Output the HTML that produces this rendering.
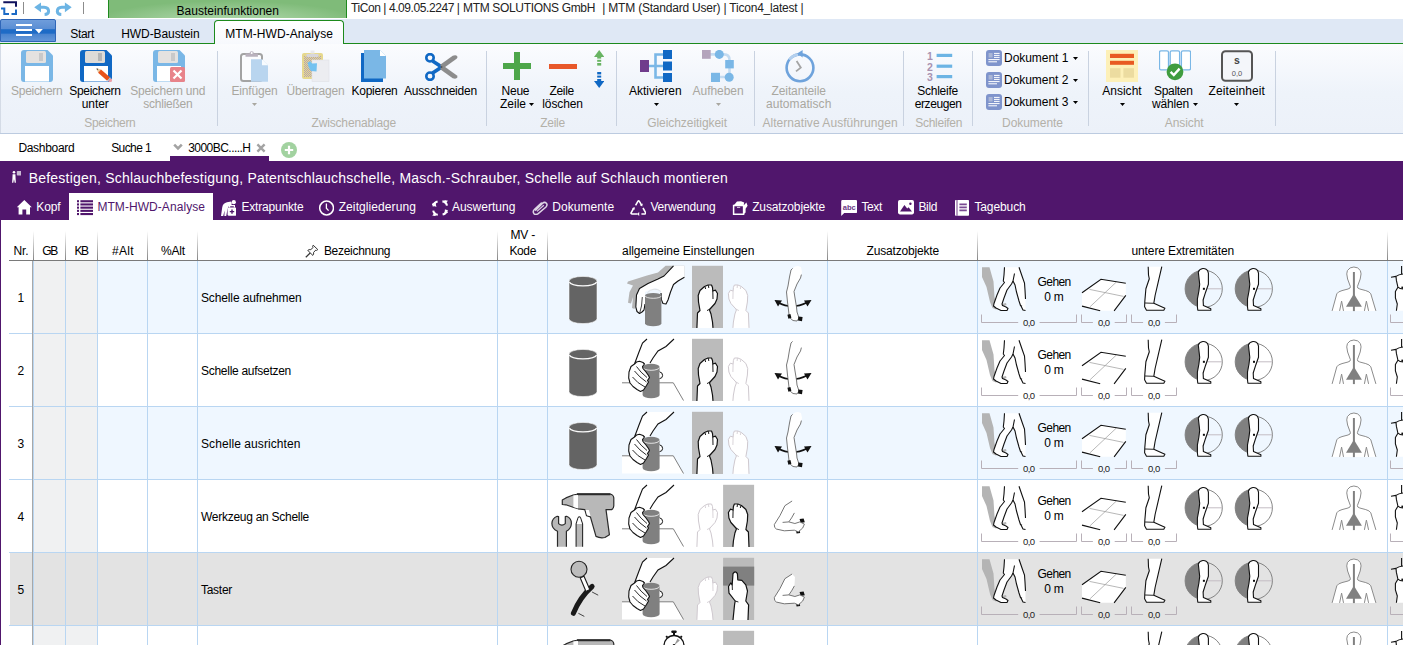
<!DOCTYPE html>
<html lang="de"><head><meta charset="utf-8"><title>TiCon</title><style>
html,body{margin:0;padding:0;background:#fff;}
body{width:1403px;height:645px;overflow:hidden;position:relative;font-family:"Liberation Sans",sans-serif;}
.t{position:absolute;white-space:nowrap;display:block;}
.b{position:absolute;display:block;}
</style></head><body>
<div class="b" style="left:0px;top:0px;width:1403px;height:19px;background:#fff"></div>
<div class="b" style="left:108px;top:0px;width:239px;height:18px;background:radial-gradient(ellipse 56% 120% at 50% 125%,#acd6a8 0%,#9ccc97 50%,#7fbb79 100%);border-left:1px solid #1e8a1e;border-right:1px solid #1e8a1e;box-sizing:border-box"></div>
<span class="t" style="left:176.60px;top:4.84px;font-size:12px;line-height:12px;letter-spacing:0.018px;color:#000;">Bausteinfunktionen</span>
<span class="t" style="left:351.00px;top:1.84px;font-size:12px;line-height:12px;letter-spacing:-0.425px;color:#222;">TiCon | 4.09.05.2247 |</span>
<span class="t" style="left:463.00px;top:1.84px;font-size:12px;line-height:12px;letter-spacing:-0.333px;color:#222;">MTM SOLUTIONS GmbH</span>
<span class="t" style="left:602.30px;top:1.84px;font-size:12px;line-height:12px;letter-spacing:-0.210px;color:#222;">| MTM (Standard User) | Ticon4_latest |</span>
<div class="b" style="left:0px;top:19px;width:1403px;height:24px;background:#dfe8f5"></div>
<div class="b" style="left:0px;top:43px;width:1403px;height:1px;background:#1c8a1c"></div>
<div class="b" style="left:0px;top:19px;width:56px;height:23px;background:linear-gradient(180deg,#6f9ddb 0%,#5a8ed4 42%,#1e6bc6 46%,#1e6bc6 63%,#4a84cf 67%,#6296d8 100%);border:1px solid #2f66b8;box-sizing:border-box;border-radius:2px 2px 0 0"></div>
<div class="b" style="left:16px;top:24px;width:16px;height:2px;background:#fff"></div>
<div class="b" style="left:16px;top:29px;width:16px;height:2px;background:#fff"></div>
<div class="b" style="left:16px;top:34px;width:16px;height:2px;background:#fff"></div>
<svg class="b" style="left:34.6px;top:29px;" width="8" height="4.6" viewBox="0 0 8 4.6"><path d="M0 0H7.8L3.9 4.4Z" fill="#fff"/></svg>
<svg class="b" style="left:0px;top:0px;" width="18" height="16" viewBox="0 0 18 16"><path d="M3.3 2.3H16V6.8" fill="none" stroke="#10125e" stroke-width="2"/><path d="M1 8.4H5.3M4.3 7.5V14H9M11.5 14H16V9.4" fill="none" stroke="#1b6ac6" stroke-width="2"/></svg>
<div class="b" style="left:23px;top:2px;width:1px;height:12px;background:#8c8c8c"></div>
<div class="b" style="left:83px;top:2px;width:1px;height:12px;background:#8c8c8c"></div>
<svg class="b" style="left:0px;top:0px;" width="106" height="17" viewBox="0 0 106 17"><path d="M34.2 7.3L41 2.4V12.2Z" fill="#6cb4e4"/><path d="M40.5 7.3H44Q48.6 7.6 48.6 11.4Q48.4 14.4 44.6 14.6" fill="none" stroke="#6cb4e4" stroke-width="3"/><g transform="translate(105.9,0) scale(-1,1)"><path d="M34.2 7.3L41 2.4V12.2Z" fill="#6cb4e4"/><path d="M40.5 7.3H44Q48.6 7.6 48.6 11.4Q48.4 14.4 44.6 14.6" fill="none" stroke="#6cb4e4" stroke-width="3"/></g></svg>
<span class="t" style="left:70.20px;top:27.84px;font-size:12px;line-height:12px;letter-spacing:-0.308px;color:#000;">Start</span>
<span class="t" style="left:121.30px;top:27.84px;font-size:12px;line-height:12px;letter-spacing:-0.096px;color:#000;">HWD-Baustein</span>
<div class="b" style="left:214px;top:20px;width:130px;height:24px;background:linear-gradient(180deg,#fff,#f7f9fd);border:1px solid #1c8a1c;border-bottom:none;border-radius:4px 4px 0 0;box-sizing:border-box"></div>
<span class="t" style="left:225.20px;top:27.84px;font-size:12px;line-height:12px;letter-spacing:0.076px;color:#000;">MTM-HWD-Analyse</span>
<div class="b" style="left:0px;top:44px;width:1403px;height:89px;background:linear-gradient(180deg,#fbfcfe 0%,#f4f7fc 30%,#eef3fa 55%,#ecf1f9 100%)"></div>
<div class="b" style="left:0px;top:133px;width:1403px;height:1px;background:#bccbe0"></div>
<div class="b" style="left:0px;top:44px;width:1px;height:89px;background:#d4dbe6"></div>
<div class="b" style="left:217px;top:51px;width:1px;height:75px;background:#c9d2e0"></div>
<div class="b" style="left:486px;top:51px;width:1px;height:75px;background:#c9d2e0"></div>
<div class="b" style="left:616px;top:51px;width:1px;height:75px;background:#c9d2e0"></div>
<div class="b" style="left:754px;top:51px;width:1px;height:75px;background:#c9d2e0"></div>
<div class="b" style="left:903px;top:51px;width:1px;height:75px;background:#c9d2e0"></div>
<div class="b" style="left:972px;top:51px;width:1px;height:75px;background:#c9d2e0"></div>
<div class="b" style="left:1088px;top:51px;width:1px;height:75px;background:#c9d2e0"></div>
<div class="b" style="left:1275px;top:51px;width:1px;height:75px;background:#c9d2e0"></div>
<span class="t" style="left:84.20px;top:116.84px;font-size:12px;line-height:12px;letter-spacing:-0.304px;color:#b3b0a8;">Speichern</span>
<span class="t" style="left:311.50px;top:116.84px;font-size:12px;line-height:12px;letter-spacing:-0.158px;color:#b3b0a8;">Zwischenablage</span>
<span class="t" style="left:540.30px;top:116.84px;font-size:12px;line-height:12px;letter-spacing:-0.302px;color:#b3b0a8;">Zeile</span>
<span class="t" style="left:647.20px;top:116.84px;font-size:12px;line-height:12px;letter-spacing:-0.056px;color:#b3b0a8;">Gleichzeitigkeit</span>
<span class="t" style="left:762.40px;top:116.84px;font-size:12px;line-height:12px;letter-spacing:0.051px;color:#b3b0a8;">Alternative Ausführungen</span>
<span class="t" style="left:915.20px;top:116.84px;font-size:12px;line-height:12px;letter-spacing:-0.263px;color:#b3b0a8;">Schleifen</span>
<span class="t" style="left:1002.00px;top:116.84px;font-size:12px;line-height:12px;letter-spacing:-0.040px;color:#b3b0a8;">Dokumente</span>
<span class="t" style="left:1164.70px;top:116.84px;font-size:12px;line-height:12px;letter-spacing:-0.064px;color:#b3b0a8;">Ansicht</span>
<span class="t" style="left:11.10px;top:84.84px;font-size:12px;line-height:12px;letter-spacing:-0.304px;color:#a9a7a0;">Speichern</span>
<span class="t" style="left:69.30px;top:84.84px;font-size:12px;line-height:12px;letter-spacing:-0.304px;color:#000;">Speichern</span>
<span class="t" style="left:81.80px;top:97.84px;font-size:12px;line-height:12px;letter-spacing:-0.110px;color:#000;">unter</span>
<span class="t" style="left:130.30px;top:84.84px;font-size:12px;line-height:12px;letter-spacing:-0.183px;color:#a9a7a0;">Speichern und</span>
<span class="t" style="left:143.30px;top:97.84px;font-size:12px;line-height:12px;letter-spacing:-0.250px;color:#a9a7a0;">schließen</span>
<span class="t" style="left:231.50px;top:84.84px;font-size:12px;line-height:12px;letter-spacing:-0.159px;color:#a9a7a0;">Einfügen</span>
<span class="t" style="left:286.50px;top:84.84px;font-size:12px;line-height:12px;letter-spacing:-0.203px;color:#a9a7a0;">Übertragen</span>
<span class="t" style="left:351.50px;top:84.84px;font-size:12px;line-height:12px;letter-spacing:-0.254px;color:#000;">Kopieren</span>
<span class="t" style="left:404.00px;top:84.84px;font-size:12px;line-height:12px;letter-spacing:-0.199px;color:#000;">Ausschneiden</span>
<span class="t" style="left:501.50px;top:84.84px;font-size:12px;line-height:12px;letter-spacing:-0.221px;color:#000;">Neue</span>
<span class="t" style="left:500.00px;top:97.84px;font-size:12px;line-height:12px;letter-spacing:-0.002px;color:#000;">Zeile</span>
<span class="t" style="left:549.40px;top:84.84px;font-size:12px;line-height:12px;letter-spacing:-0.282px;color:#000;">Zeile</span>
<span class="t" style="left:542.30px;top:97.84px;font-size:12px;line-height:12px;letter-spacing:-0.123px;color:#000;">löschen</span>
<span class="t" style="left:629.00px;top:84.84px;font-size:12px;line-height:12px;letter-spacing:-0.009px;color:#000;">Aktivieren</span>
<span class="t" style="left:692.60px;top:84.84px;font-size:12px;line-height:12px;letter-spacing:-0.060px;color:#a9a7a0;">Aufheben</span>
<span class="t" style="left:771.50px;top:84.84px;font-size:12px;line-height:12px;letter-spacing:-0.096px;color:#a9a7a0;">Zeitanteile</span>
<span class="t" style="left:766.00px;top:97.84px;font-size:12px;line-height:12px;letter-spacing:0.064px;color:#a9a7a0;">automatisch</span>
<span class="t" style="left:917.20px;top:84.84px;font-size:12px;line-height:12px;letter-spacing:-0.236px;color:#000;">Schleife</span>
<span class="t" style="left:914.70px;top:97.84px;font-size:12px;line-height:12px;letter-spacing:-0.392px;color:#000;">erzeugen</span>
<span class="t" style="left:1004.00px;top:51.84px;font-size:12px;line-height:12px;letter-spacing:-0.040px;color:#000;">Dokument 1</span>
<span class="t" style="left:1004.00px;top:73.84px;font-size:12px;line-height:12px;letter-spacing:-0.040px;color:#000;">Dokument 2</span>
<span class="t" style="left:1004.00px;top:95.84px;font-size:12px;line-height:12px;letter-spacing:-0.040px;color:#000;">Dokument 3</span>
<span class="t" style="left:1102.20px;top:84.84px;font-size:12px;line-height:12px;letter-spacing:0.021px;color:#000;">Ansicht</span>
<span class="t" style="left:1154.00px;top:84.84px;font-size:12px;line-height:12px;letter-spacing:-0.300px;color:#000;">Spalten</span>
<span class="t" style="left:1152.00px;top:97.84px;font-size:12px;line-height:12px;letter-spacing:-0.171px;color:#000;">wählen</span>
<span class="t" style="left:1208.60px;top:84.84px;font-size:12px;line-height:12px;letter-spacing:0.094px;color:#000;">Zeiteinheit</span>
<svg class="b" style="left:252px;top:103.2px;" width="5" height="3" viewBox="0 0 5 3"><path d="M0 0H5L2.5 3Z" fill="#a9a7a0"/></svg>
<svg class="b" style="left:529px;top:103.2px;" width="5" height="3" viewBox="0 0 5 3"><path d="M0 0H5L2.5 3Z" fill="#000"/></svg>
<svg class="b" style="left:654px;top:103.2px;" width="5" height="3" viewBox="0 0 5 3"><path d="M0 0H5L2.5 3Z" fill="#000"/></svg>
<svg class="b" style="left:716px;top:103.2px;" width="5" height="3" viewBox="0 0 5 3"><path d="M0 0H5L2.5 3Z" fill="#a9a7a0"/></svg>
<svg class="b" style="left:1073px;top:57.2px;" width="5" height="3" viewBox="0 0 5 3"><path d="M0 0H5L2.5 3Z" fill="#000"/></svg>
<svg class="b" style="left:1073px;top:79.2px;" width="5" height="3" viewBox="0 0 5 3"><path d="M0 0H5L2.5 3Z" fill="#000"/></svg>
<svg class="b" style="left:1073px;top:101.2px;" width="5" height="3" viewBox="0 0 5 3"><path d="M0 0H5L2.5 3Z" fill="#000"/></svg>
<svg class="b" style="left:1120px;top:103.2px;" width="5" height="3" viewBox="0 0 5 3"><path d="M0 0H5L2.5 3Z" fill="#000"/></svg>
<svg class="b" style="left:1193px;top:103.2px;" width="5" height="3" viewBox="0 0 5 3"><path d="M0 0H5L2.5 3Z" fill="#000"/></svg>
<svg class="b" style="left:1234px;top:103.2px;" width="5" height="3" viewBox="0 0 5 3"><path d="M0 0H5L2.5 3Z" fill="#000"/></svg>
<svg class="b" style="left:21px;top:50px;" width="32" height="32" viewBox="0 0 32 32"><path d="M3 0H26.5L32 5.5V29a3 3 0 0 1-3 3H3a3 3 0 0 1-3-3V3a3 3 0 0 1 3-3Z" fill="#7ab7e6"/><rect x="5" y="1" width="20" height="12" rx="1.5" fill="#e4e2e0"/><rect x="18" y="3" width="4" height="8" fill="#c9c9c9"/><rect x="4" y="16" width="24" height="15.5" fill="#fff"/></svg>
<svg class="b" style="left:80px;top:50px;" width="32" height="32" viewBox="0 0 32 32"><path d="M3 0H26.5L32 5.5V29a3 3 0 0 1-3 3H3a3 3 0 0 1-3-3V3a3 3 0 0 1 3-3Z" fill="#1068c4"/><rect x="5" y="1" width="20" height="12" rx="1.5" fill="#dddbd8"/><rect x="18" y="3" width="4" height="8" fill="#b5b5b5"/><rect x="4" y="16" width="24" height="15.5" fill="#fff"/><g transform="translate(16.5,18.5) rotate(41)"><path d="M0 0L4 -2.2V2.2Z" fill="#e8c9a0"/><path d="M0 0L1.6 -.9V.9Z" fill="#333"/><rect x="4" y="-2.2" width="12" height="4.4" fill="#e8521a"/><rect x="16" y="-2.2" width="1.3" height="4.4" fill="#c9c9c9"/><rect x="17.3" y="-2.2" width="2.6" height="4.4" rx="1" fill="#f0a0a8"/></g></svg>
<svg class="b" style="left:153px;top:50px;" width="32" height="32" viewBox="0 0 32 32"><path d="M3 0H26.5L32 5.5V29a3 3 0 0 1-3 3H3a3 3 0 0 1-3-3V3a3 3 0 0 1 3-3Z" fill="#7ab7e6"/><rect x="5" y="1" width="20" height="12" rx="1.5" fill="#e4e2e0"/><rect x="18" y="3" width="4" height="8" fill="#c9c9c9"/><rect x="4" y="16" width="24" height="15.5" fill="#fff"/><rect x="17" y="17" width="15" height="15" rx="1.5" fill="#e8838a"/><path d="M20.5 20.5L28.5 28.5M28.5 20.5L20.5 28.5" stroke="#fff" stroke-width="2.2"/></svg>
<svg class="b" style="left:240px;top:50px;" width="32" height="32" viewBox="0 0 32 32"><rect x="1" y="4" width="21" height="27" rx="2.5" fill="#fbfcfe" stroke="#a3a3a3" stroke-width="2"/><path d="M5.5 3.5h4a2.2 2.2 0 0 1 4.4 0h4v3.2h-12.4z" fill="#b9b1bd"/><circle cx="11.7" cy="3" r="1" fill="#fff"/><path d="M11 9.2H22L28 15.2V31.7H11Z" fill="#b9d5ef"/><path d="M22 9.2L28 15.2H22Z" fill="#fff" opacity=".9"/></svg>
<svg class="b" style="left:302px;top:50px;" width="28" height="32" viewBox="0 0 28 32"><pattern id="dth" width="2" height="2" patternUnits="userSpaceOnUse"><rect width="2" height="2" fill="#ecdc8c"/><rect width="1" height="1" fill="#a99ab8"/><rect x="1" y="1" width="1" height="1" fill="#a99ab8"/></pattern><rect x="0" y="3" width="21" height="26" rx="2" fill="#e6d88e"/><rect x="2" y="6" width="17" height="21" fill="url(#dth)" opacity=".85"/><rect x="4.5" y="4" width="12" height="3" fill="#d8d6da"/><rect x="8.5" y="0.5" width="4" height="3" fill="#e9e9ee"/><rect x="10" y="10" width="17" height="21.5" fill="#ecedf1" stroke="#e0e1e6" stroke-width=".6"/><path d="M5.5 12.5L8.5 11.2L10.2 13.5L15 13.2L14.5 21.5L9 21L6.8 17.5Z" fill="#74c2f0"/></svg>
<svg class="b" style="left:361px;top:50px;" width="26" height="32" viewBox="0 0 26 32"><rect x="0" y="3" width="22" height="29" fill="#1068c4"/><path d="M3 0H19L25 6V28.5H3Z" fill="#7ab7e6"/><path d="M19 0L25 6H19Z" fill="#fff"/></svg>
<svg class="b" style="left:425px;top:53px;" width="33" height="28" viewBox="0 0 33 28"><path d="M8.2 6.2L18.6 13L16.4 16L6.6 9.6Z" fill="#1068c4"/><path d="M8.2 21.8L18.6 15L16.4 12L6.6 18.4Z" fill="#1068c4"/><path d="M15.2 11.8L27.7 2.8Q31 1.6 32.4 3.4Q32.8 4.8 31.6 5.8L19.1 14.8L16 14.2Z" fill="#8c8c8c"/><path d="M15.2 16.2L27.7 25.2Q31 26.4 32.4 24.6Q32.8 23.2 31.6 22.2L19.1 13.2L16 13.8Z" fill="#8c8c8c"/><circle cx="5" cy="4.8" r="3.7" fill="none" stroke="#1068c4" stroke-width="2.6"/><circle cx="5" cy="23.2" r="3.7" fill="none" stroke="#1068c4" stroke-width="2.6"/><circle cx="16.6" cy="14" r=".9" fill="#555"/></svg>
<div class="b" style="left:503px;top:63px;width:28px;height:6px;background:#4da64a"></div>
<div class="b" style="left:514px;top:52px;width:6px;height:28px;background:#4da64a"></div>
<div class="b" style="left:549px;top:63.5px;width:28px;height:5px;background:#e8582a"></div>
<svg class="b" style="left:594px;top:50.3px;" width="10.4" height="16" viewBox="0 0 10.4 16"><path d="M5.2 0L10.4 7H0Z" fill="#69b463"/><rect x="3.2" y="5" width="4" height="3.6" fill="#69b463"/><rect x="3.2" y="9.8" width="4" height="2" fill="#69b463"/><rect x="3.2" y="13" width="4" height="2.6" fill="#69b463"/></svg>
<svg class="b" style="left:594px;top:72px;" width="10.4" height="16" viewBox="0 0 10.4 16"><path d="M5.2 16L10.4 9H0Z" fill="#1068c4"/><rect x="3.2" y="7" width="4" height="3" fill="#1068c4"/><rect x="3.2" y="3.6" width="4" height="2" fill="#1068c4"/><rect x="3.2" y="0" width="4" height="2.4" fill="#1068c4"/></svg>
<svg class="b" style="left:640px;top:50px;" width="32" height="32" viewBox="0 0 32 32"><path d="M9 16H23M15.5 4.5H23M15.5 27.5H23M15.5 3.2V28.8" stroke="#7ab7e6" stroke-width="2.6" fill="none"/><rect x="0" y="10" width="9" height="12" fill="#703c8c"/><rect x="23" y="0" width="9" height="9" fill="#1068c4"/><rect x="23" y="11.5" width="9" height="9" fill="#1068c4"/><rect x="23" y="23" width="9" height="9" fill="#1068c4"/></svg>
<svg class="b" style="left:702px;top:50px;" width="32" height="32" viewBox="0 0 32 32"><path d="M8 4.4H22Q27.5 4.4 27.5 10V27H14" stroke="#c3dbf1" stroke-width="2.6" fill="none"/><rect x="0" y="0" width="8.7" height="8.8" fill="#b4a4bc"/><circle cx="17.3" cy="4.4" r="4.5" fill="#7ab7e6"/><rect x="23.2" y="10" width="8.6" height="8.4" fill="#7ab7e6"/><rect x="9" y="22.8" width="9" height="9.2" fill="#7ab7e6"/><circle cx="27.2" cy="27.2" r="4.5" fill="#7ab7e6"/></svg>
<svg class="b" style="left:785px;top:50px;" width="30.5" height="32.5" viewBox="0 0 30.5 32.5"><circle cx="15" cy="17.8" r="13.4" fill="none" stroke="#6fa3dc" stroke-width="2.6"/><path d="M4.2 9.5A13.4 13.4 0 0 1 13 4.6" stroke="#b4d0ee" stroke-width="2.6" fill="none"/><path d="M12.2 3.6L17.6 0V7.6Z" fill="#6fa3dc"/><path d="M11.6 11L15.8 17.6L11 21.4" stroke="#a4a4a4" stroke-width="1.8" fill="none"/></svg>
<svg class="b" style="left:926.6px;top:51.5px;" width="26" height="30" viewBox="0 0 26 30"><rect x="9.6" y="1.8" width="15.6" height="3.2" fill="#6cb4e4"/><rect x="9.6" y="12.6" width="15.6" height="3.2" fill="#6cb4e4"/><rect x="9.6" y="23" width="15.6" height="3.2" fill="#6cb4e4"/><text x="3" y="8" font-family="Liberation Sans,sans-serif" font-weight="bold" font-size="10.5" fill="#a892b0" text-anchor="middle">1</text><text x="3" y="19" font-family="Liberation Sans,sans-serif" font-weight="bold" font-size="10.5" fill="#a892b0" text-anchor="middle">2</text><text x="3" y="29.2" font-family="Liberation Sans,sans-serif" font-weight="bold" font-size="10.5" fill="#a892b0" text-anchor="middle">3</text></svg>
<svg class="b" style="left:986px;top:50px;" width="16" height="16" viewBox="0 0 16 16"><rect x="0" y="0" width="16" height="16" rx="3" fill="#7f94cc"/><rect x="2.6" y="3" width="4" height="4.6" fill="#aab6d6"/><path d="M8 3.4H13.6M8 5.4H13.6M8 7.4H13.6M2.4 9.6H13.6M2.4 11.8H11" stroke="#fff" stroke-width="1"/></svg>
<svg class="b" style="left:986px;top:72px;" width="16" height="16" viewBox="0 0 16 16"><rect x="0" y="0" width="16" height="16" rx="3" fill="#7f94cc"/><rect x="2.6" y="3" width="4" height="4.6" fill="#aab6d6"/><path d="M8 3.4H13.6M8 5.4H13.6M8 7.4H13.6M2.4 9.6H13.6M2.4 11.8H11" stroke="#fff" stroke-width="1"/></svg>
<svg class="b" style="left:986px;top:94px;" width="16" height="16" viewBox="0 0 16 16"><rect x="0" y="0" width="16" height="16" rx="3" fill="#7f94cc"/><rect x="2.6" y="3" width="4" height="4.6" fill="#aab6d6"/><path d="M8 3.4H13.6M8 5.4H13.6M8 7.4H13.6M2.4 9.6H13.6M2.4 11.8H11" stroke="#fff" stroke-width="1"/></svg>
<svg class="b" style="left:1106px;top:50px;" width="32" height="32" viewBox="0 0 32 32"><rect width="32" height="32" fill="#fdf0b8"/><rect x="4" y="3.8" width="24" height="4.2" fill="#e85a22"/><rect x="4" y="10.8" width="24" height="4" fill="#e85a22"/><rect x="4" y="18.2" width="10.5" height="9.5" fill="#ecdca0"/><rect x="17.4" y="18.2" width="10.6" height="9.5" fill="#ecdca0"/></svg>
<svg class="b" style="left:1159px;top:50px;" width="32" height="31" viewBox="0 0 32 31"><rect x=".5" y=".8" width="9" height="19" rx="1.5" fill="#fff" stroke="#7ab7e6" stroke-width="1.3"/><rect x="11.2" y=".8" width="9.4" height="19" rx="1.5" fill="#fff" stroke="#7ab7e6" stroke-width="1.3"/><rect x="22.4" y=".8" width="9.2" height="19" rx="1.5" fill="#fff" stroke="#7ab7e6" stroke-width="1.3"/><circle cx="16" cy="21.8" r="8.4" fill="#3f9c3f"/><path d="M11.6 21.8L14.8 25L20.6 18.6" stroke="#fff" stroke-width="2.4" fill="none"/></svg>
<svg class="b" style="left:1221px;top:50px;" width="32" height="32" viewBox="0 0 32 32"><rect x="1" y="1.3" width="30" height="29.4" rx="3.5" fill="#f4f6fa" stroke="#555" stroke-width="2"/><text x="16" y="13.6" font-family="Liberation Sans,sans-serif" font-weight="bold" font-size="10.5" fill="#444" text-anchor="middle">s</text><text x="16" y="26" font-family="Liberation Sans,sans-serif" font-size="7.5" fill="#555" text-anchor="middle">0,0</text></svg>
<span class="t" style="left:18.40px;top:141.84px;font-size:12px;line-height:12px;letter-spacing:-0.311px;color:#000;">Dashboard</span>
<span class="t" style="left:111.20px;top:141.84px;font-size:12px;line-height:12px;letter-spacing:-0.590px;color:#000;">Suche 1</span>
<span class="t" style="left:188.20px;top:141.84px;font-size:12px;line-height:12px;letter-spacing:-0.533px;color:#000;">3000BC.....H</span>
<div class="b" style="left:170px;top:156px;width:99px;height:5px;background:#50166c"></div>
<div class="b" style="left:0px;top:161px;width:1403px;height:59px;background:#50166c"></div>
<div class="b" style="left:0px;top:220px;width:1px;height:425px;background:#50166c"></div>
<span class="t" style="left:28.70px;top:170.95px;font-size:14px;line-height:14px;letter-spacing:0.214px;color:#fff;">Befestigen, Schlauchbefestigung, Patentschlauchschelle, Masch.-Schrauber, Schelle auf Schlauch montieren</span>
<div class="b" style="left:69px;top:193px;width:144px;height:27px;background:#fff"></div>
<span class="t" style="left:36.30px;top:201.34px;font-size:12px;line-height:12px;letter-spacing:-0.121px;color:#fff;">Kopf</span>
<span class="t" style="left:97.40px;top:201.34px;font-size:12px;line-height:12px;letter-spacing:0.063px;color:#50166c;">MTM-HWD-Analyse</span>
<span class="t" style="left:241.40px;top:201.34px;font-size:12px;line-height:12px;letter-spacing:-0.185px;color:#fff;">Extrapunkte</span>
<span class="t" style="left:338.70px;top:201.34px;font-size:12px;line-height:12px;letter-spacing:0.090px;color:#fff;">Zeitgliederung</span>
<span class="t" style="left:451.90px;top:201.34px;font-size:12px;line-height:12px;letter-spacing:0.013px;color:#fff;">Auswertung</span>
<span class="t" style="left:552.20px;top:201.34px;font-size:12px;line-height:12px;letter-spacing:0.071px;color:#fff;">Dokumente</span>
<span class="t" style="left:650.40px;top:201.34px;font-size:12px;line-height:12px;letter-spacing:-0.172px;color:#fff;">Verwendung</span>
<span class="t" style="left:752.20px;top:201.34px;font-size:12px;line-height:12px;letter-spacing:-0.146px;color:#fff;">Zusatzobjekte</span>
<span class="t" style="left:861.50px;top:201.34px;font-size:12px;line-height:12px;letter-spacing:-0.402px;color:#fff;">Text</span>
<span class="t" style="left:918.40px;top:201.34px;font-size:12px;line-height:12px;letter-spacing:-0.302px;color:#fff;">Bild</span>
<span class="t" style="left:974.40px;top:201.34px;font-size:12px;line-height:12px;letter-spacing:-0.105px;color:#fff;">Tagebuch</span>
<div class="b" style="left:34px;top:261px;width:1369px;height:72px;background:#eff7ff"></div>
<div class="b" style="left:34px;top:261px;width:63px;height:72px;background:#f0f1f2"></div>
<div class="b" style="left:9px;top:333px;width:1394px;height:1px;background:#b9d6f2"></div>
<div class="b" style="left:34px;top:334px;width:63px;height:72px;background:#f0f1f2"></div>
<div class="b" style="left:9px;top:406px;width:1394px;height:1px;background:#b9d6f2"></div>
<div class="b" style="left:34px;top:407px;width:1369px;height:72px;background:#eff7ff"></div>
<div class="b" style="left:34px;top:407px;width:63px;height:72px;background:#f0f1f2"></div>
<div class="b" style="left:9px;top:479px;width:1394px;height:1px;background:#b9d6f2"></div>
<div class="b" style="left:34px;top:480px;width:63px;height:72px;background:#f0f1f2"></div>
<div class="b" style="left:9px;top:552px;width:1394px;height:1px;background:#b9d6f2"></div>
<div class="b" style="left:10px;top:553px;width:1393px;height:72px;background:#e3e3e3"></div>
<div class="b" style="left:9px;top:625px;width:1394px;height:1px;background:#b9d6f2"></div>
<div class="b" style="left:34px;top:626px;width:63px;height:19px;background:#f0f1f2"></div>
<div class="b" style="left:33px;top:261px;width:1px;height:384px;background:#b9d6f2"></div>
<div class="b" style="left:65px;top:261px;width:1px;height:384px;background:#b9d6f2"></div>
<div class="b" style="left:97px;top:261px;width:1px;height:384px;background:#b9d6f2"></div>
<div class="b" style="left:147px;top:261px;width:1px;height:384px;background:#b9d6f2"></div>
<div class="b" style="left:197px;top:261px;width:1px;height:384px;background:#b9d6f2"></div>
<div class="b" style="left:497px;top:261px;width:1px;height:384px;background:#b9d6f2"></div>
<div class="b" style="left:547px;top:261px;width:1px;height:384px;background:#b9d6f2"></div>
<div class="b" style="left:827px;top:261px;width:1px;height:384px;background:#b9d6f2"></div>
<div class="b" style="left:977px;top:261px;width:1px;height:384px;background:#b9d6f2"></div>
<div class="b" style="left:1387px;top:261px;width:1px;height:384px;background:#b9d6f2"></div>
<div class="b" style="left:32px;top:261px;width:1px;height:384px;background:#a8a8a8"></div>
<div class="b" style="left:9px;top:260px;width:1394px;height:1px;background:#7a7a7a"></div>
<div class="b" style="left:33px;top:231px;width:1px;height:29px;background:linear-gradient(180deg,rgba(120,120,120,0) 0%,rgba(120,120,120,.9) 100%)"></div>
<div class="b" style="left:65px;top:231px;width:1px;height:29px;background:linear-gradient(180deg,rgba(120,120,120,0) 0%,rgba(120,120,120,.9) 100%)"></div>
<div class="b" style="left:97px;top:231px;width:1px;height:29px;background:linear-gradient(180deg,rgba(120,120,120,0) 0%,rgba(120,120,120,.9) 100%)"></div>
<div class="b" style="left:147px;top:231px;width:1px;height:29px;background:linear-gradient(180deg,rgba(120,120,120,0) 0%,rgba(120,120,120,.9) 100%)"></div>
<div class="b" style="left:197px;top:231px;width:1px;height:29px;background:linear-gradient(180deg,rgba(120,120,120,0) 0%,rgba(120,120,120,.9) 100%)"></div>
<div class="b" style="left:497px;top:231px;width:1px;height:29px;background:linear-gradient(180deg,rgba(120,120,120,0) 0%,rgba(120,120,120,.9) 100%)"></div>
<div class="b" style="left:547px;top:231px;width:1px;height:29px;background:linear-gradient(180deg,rgba(120,120,120,0) 0%,rgba(120,120,120,.9) 100%)"></div>
<div class="b" style="left:827px;top:231px;width:1px;height:29px;background:linear-gradient(180deg,rgba(120,120,120,0) 0%,rgba(120,120,120,.9) 100%)"></div>
<div class="b" style="left:977px;top:231px;width:1px;height:29px;background:linear-gradient(180deg,rgba(120,120,120,0) 0%,rgba(120,120,120,.9) 100%)"></div>
<div class="b" style="left:1387px;top:231px;width:1px;height:29px;background:linear-gradient(180deg,rgba(120,120,120,0) 0%,rgba(120,120,120,.9) 100%)"></div>
<span class="t" style="left:13.50px;top:244.84px;font-size:12px;line-height:12px;letter-spacing:-0.111px;color:#000;">Nr.</span>
<span class="t" style="left:42.30px;top:244.84px;font-size:12px;line-height:12px;letter-spacing:-1.319px;color:#000;">GB</span>
<span class="t" style="left:74.50px;top:244.84px;font-size:12px;line-height:12px;letter-spacing:-1.504px;color:#000;">KB</span>
<span class="t" style="left:112.00px;top:244.84px;font-size:12px;line-height:12px;letter-spacing:0.331px;color:#000;">#Alt</span>
<span class="t" style="left:161.00px;top:244.84px;font-size:12px;line-height:12px;letter-spacing:-0.169px;color:#000;">%Alt</span>
<span class="t" style="left:323.90px;top:244.84px;font-size:12px;line-height:12px;letter-spacing:-0.280px;color:#000;">Bezeichnung</span>
<span class="t" style="left:510.50px;top:229.34px;font-size:12px;line-height:12px;letter-spacing:-0.207px;color:#000;">MV -</span>
<span class="t" style="left:509.50px;top:244.84px;font-size:12px;line-height:12px;letter-spacing:-0.406px;color:#000;">Kode</span>
<span class="t" style="left:622.00px;top:244.84px;font-size:12px;line-height:12px;letter-spacing:-0.046px;color:#000;">allgemeine Einstellungen</span>
<span class="t" style="left:866.60px;top:244.84px;font-size:12px;line-height:12px;letter-spacing:-0.185px;color:#000;">Zusatzobjekte</span>
<span class="t" style="left:1131.50px;top:244.84px;font-size:12px;line-height:12px;letter-spacing:-0.116px;color:#000;">untere Extremitäten</span>
<span class="t" style="left:17.60px;top:291.84px;font-size:12px;line-height:12px;letter-spacing:-1.873px;color:#000;">1</span>
<span class="t" style="left:201.00px;top:291.84px;font-size:12px;line-height:12px;letter-spacing:-0.131px;color:#000;">Schelle aufnehmen</span>
<span class="t" style="left:17.60px;top:364.84px;font-size:12px;line-height:12px;letter-spacing:-1.873px;color:#000;">2</span>
<span class="t" style="left:201.00px;top:364.84px;font-size:12px;line-height:12px;letter-spacing:-0.278px;color:#000;">Schelle aufsetzen</span>
<span class="t" style="left:17.60px;top:437.84px;font-size:12px;line-height:12px;letter-spacing:-1.873px;color:#000;">3</span>
<span class="t" style="left:201.00px;top:437.84px;font-size:12px;line-height:12px;letter-spacing:0.080px;color:#000;">Schelle ausrichten</span>
<span class="t" style="left:17.60px;top:510.84px;font-size:12px;line-height:12px;letter-spacing:-1.873px;color:#000;">4</span>
<span class="t" style="left:201.00px;top:510.84px;font-size:12px;line-height:12px;letter-spacing:-0.272px;color:#000;">Werkzeug an Schelle</span>
<span class="t" style="left:17.60px;top:583.84px;font-size:12px;line-height:12px;letter-spacing:-1.873px;color:#000;">5</span>
<span class="t" style="left:201.00px;top:583.84px;font-size:12px;line-height:12px;letter-spacing:-0.279px;color:#000;">Taster</span>
<svg class="b" style="left:11.5px;top:171.2px;" width="9.6" height="12" viewBox="0 0 9.6 12"><circle cx="2" cy="1.3" r="1.3" fill="#fff"/><path d="M.6 3.2H3.4L3.6 7.6L3.9 11.8H2.7L2 8L1.3 11.8H.1L.4 7.6Z" fill="#fff"/><rect x="4.8" y="0" width="4.6" height="4.6" rx=".8" fill="#c9b9d4"/></svg>
<svg class="b" style="left:16.5px;top:200.3px;" width="15" height="15" viewBox="0 0 15 15"><path d="M7.3 0L14.8 7.2H13V14.6H9.2V9.6H5.4V14.6H1.6V7.2H-.2Z" fill="#fff"/></svg>
<svg class="b" style="left:77px;top:200px;" width="16" height="16" viewBox="0 0 16 16"><rect x="3.4" y="0.2" width="12.6" height="2.1" fill="#50166c"/><rect x="0" y="0.2" width="2" height="2.1" fill="#50166c"/><rect x="3.4" y="3.4" width="12.6" height="2.1" fill="#50166c"/><rect x="0" y="3.4" width="2" height="2.1" fill="#50166c"/><rect x="3.4" y="6.6" width="12.6" height="2.1" fill="#50166c"/><rect x="0" y="6.6" width="2" height="2.1" fill="#50166c"/><rect x="3.4" y="9.8" width="12.6" height="2.1" fill="#50166c"/><rect x="0" y="9.8" width="2" height="2.1" fill="#50166c"/><rect x="3.4" y="13.0" width="12.6" height="2.1" fill="#50166c"/><rect x="0" y="13.0" width="2" height="2.1" fill="#50166c"/></svg>
<svg class="b" style="left:220.8px;top:200px;" width="15.6" height="16" viewBox="0 0 15.6 16"><circle cx="12.8" cy="2.2" r="2.1" fill="#fff"/><path d="M0 16L1.2 7.5Q1.8 3 6 2.2L10.2 1.4Q11.4 3.6 10 5.6L7.6 6.4L6.6 9L5.2 16H3.4L3.6 10.4L2.2 16Z" fill="#fff"/><rect x="6.6" y="7.4" width="8.8" height="8.4" rx="1.4" fill="#fff"/><path d="M8.6 7.4V5.6H13.4V7.4" stroke="#fff" stroke-width="1.2" fill="none"/><path d="M11 9.4V13.8M8.8 11.6H13.2" stroke="#50166c" stroke-width="1.4"/></svg>
<svg class="b" style="left:318.7px;top:199.9px;" width="15.4" height="16" viewBox="0 0 15.4 16"><circle cx="7.6" cy="8" r="6.9" fill="none" stroke="#fff" stroke-width="1.5"/><path d="M7.4 3.4V8.2L9.6 10.6" stroke="#fff" stroke-width="1.3" fill="none"/></svg>
<svg class="b" style="left:432px;top:199.8px;" width="16.4" height="16.4" viewBox="0 0 16.4 16.4"><path d="M1.4 6.4Q1.8 2.6 5.6 1.6" stroke="#fff" stroke-width="2.1" fill="none"/><path d="M-.4 3.4L4.4 2.6L3.6 7.6Z" fill="#fff" transform="rotate(-20 2 5)"/><path d="M10.4 1.4Q14.2 1.8 15 5.6" stroke="#fff" stroke-width="2.1" fill="none"/><path d="M12.4 0L16 .8L13 4Z" fill="#fff"/><path d="M14.8 9.8Q14.4 13.6 10.6 14.6" stroke="#fff" stroke-width="2.1" fill="none"/><path d="M16.2 12.6L12.4 13.4L13 9Z" fill="#fff"/><path d="M5.8 14.8Q2 14.4 1.2 10.6" stroke="#fff" stroke-width="2.1" fill="none"/><path d="M3.8 16.2L.2 15.4L3.2 12.2Z" fill="#fff"/></svg>
<svg class="b" style="left:531.6px;top:199.6px;" width="16.6" height="15.6" viewBox="0 0 16.6 15.6"><path d="M3.2 10.6L10.4 3.4Q12.6 1.4 14.4 3.2Q15.8 5 14 7L6.2 13.6Q3.6 15.4 1.8 13.4Q.4 11.4 2.6 9.2L9.8 2.6" stroke="#ddd4e4" stroke-width="1.5" fill="none"/><path d="M5 11.4L11.8 5.2" stroke="#ddd4e4" stroke-width="1.2"/></svg>
<svg class="b" style="left:629.6px;top:199.8px;" width="16.8" height="16.4" viewBox="0 0 16.8 16.4"><path d="M5.6 5.4L8 1.2Q8.6 .4 9.2 1.2L11.6 5.2M13 8L15.6 12.6Q16 13.8 14.8 14H11.4M7.4 14H2.2Q.6 13.8 1.2 12.6L3.6 8.4" stroke="#fff" stroke-width="1.6" fill="none"/><path d="M9.2 12L7 14L9.2 16Z M12.8 3.6L12.2 6.4L9.8 5Z M2 8.2L4.6 7L4.8 9.8Z" fill="#fff"/></svg>
<svg class="b" style="left:732px;top:200px;" width="16" height="15" viewBox="0 0 16 15"><path d="M1.6 5.4H11.6V14.2H1.6Z" fill="none" stroke="#fff" stroke-width="1.5"/><path d="M1.6 5.4L5 1.6L9 1.2L12.2 2.6L11.6 5.4" fill="#fff"/><path d="M11.6 5.4L14.4 2.4L15.6 5.8L13.6 8.8V12.6L11.6 14.2Z" fill="#fff"/><rect x="5" y="6.8" width="3.2" height="1.2" fill="#cbb8d6"/></svg>
<svg class="b" style="left:840.6px;top:200px;" width="16.4" height="16" viewBox="0 0 16.4 16"><path d="M1.4 0H14.8Q16.2 0 16.2 1.4V11.6Q16.2 13 14.8 13H3.2L.2 16V1.4Q.2 0 1.4 0Z" fill="#fff"/><text x="8.3" y="9.6" font-family="Liberation Sans,sans-serif" font-weight="bold" font-size="7.6" fill="#6a3a86" text-anchor="middle">abc</text></svg>
<svg class="b" style="left:898px;top:200.4px;" width="16" height="14.4" viewBox="0 0 16 14.4"><rect x="0" y="0" width="16" height="14.4" rx="1.8" fill="#fff"/><path d="M2 11.4L6.4 5L9.2 8.6L10.6 7.2L14 11.4Z" fill="#50166c"/><circle cx="12.4" cy="3.8" r="1.2" fill="#50166c"/></svg>
<svg class="b" style="left:955px;top:200.2px;" width="14" height="15.8" viewBox="0 0 14 15.8"><rect x="0" y="0" width="14" height="15.8" rx=".8" fill="#fff"/><rect x="1.6" y="0" width=".8" height="15.8" fill="#50166c"/><path d="M4.4 4.4H11.8M4.4 7.4H11.8M4.4 10.4H11.8" stroke="#7a4a92" stroke-width="1.7"/></svg>
<svg class="b" style="left:172.6px;top:143.2px;" width="10" height="8" viewBox="0 0 10 8"><path d="M1.2 1.6L5 5.4L8.8 1.6" stroke="#a3a3a3" stroke-width="2.6" fill="none"/></svg>
<svg class="b" style="left:255.5px;top:142.5px;" width="10" height="10" viewBox="0 0 10 10"><path d="M1.4 1.4L8.6 8.6M8.6 1.4L1.4 8.6" stroke="#a3a3a3" stroke-width="2.4"/></svg>
<svg class="b" style="left:281px;top:142px;" width="16" height="16" viewBox="0 0 16 16"><circle cx="8" cy="8" r="8" fill="#a2d2a0"/><path d="M8 3.8V12.2M3.8 8H12.2" stroke="#fff" stroke-width="2.2"/></svg>
<svg class="b" style="left:305px;top:244px;" width="14" height="14" viewBox="0 0 14 14"><path d="M8.2 1.2L12.8 5.6L11.6 6.4L10.8 6L8.6 8.4Q9 10.4 7.8 11.4L2.8 6.4Q4 5.2 5.8 5.6L8.2 3.4L7.6 2.4Z" fill="#fff" stroke="#333" stroke-width="1"/><path d="M5.2 9L.8 13.2" stroke="#333" stroke-width="1.2"/></svg>
<svg class="b" style="left:0;top:0" width="1403" height="645" viewBox="0 0 1403 645"><g transform="translate(0,0)"><path d="M569 281.4A14 5 0 0 1 597 281.4V318.6A14 5 0 0 1 569 318.6Z" fill="#646464" stroke="#fff" stroke-opacity=".7" stroke-width=".8"/><path d="M569.3 281.9A13.8 4.6 0 0 0 596.7 281.9" stroke="#fbfbfb" stroke-width="1.3" fill="none"/><g transform="translate(620,262)"><path d="M45.6 3.8H64.4V15.2L53.5 22.5L40 20L17 30L17 38L14.5 47L12 46L13 35L11 41.5L8 40.7L9.5 30L13 23.5L7 21.5L8 19.5L27 13.5L38 10.5Z" fill="#b4b4b4"/><path d="M53.5 3.8H64.4V15.2L58 19L53.5 22.5L50.5 30L48 38L46 42L43 41.5L41.5 38L41 28.5L36 26L30 27.5L25 30L25 42L24 48L22 50L19.5 51.5L17 49.5L15.8 45L16.5 33L19.5 26.5L28 21.5L38 17L44 14Z" fill="#fff"/><path d="M53.5 3.8L44 14L38 17L28 21.5L19.5 26.5L16.5 33L15.8 45L17 49.5L19.5 51.5L22 50L24 48L25 42" fill="none" stroke="#111" stroke-width="1.1" stroke-linejoin="round"/><path d="M19.8 50.6L21.5 44L22.3 35" fill="none" stroke="#111" stroke-width=".8"/><path d="M64.4 15.2L58 19L53.5 22.5L50.5 30L48 38L46 42L43 41.5L41.5 38L41 31" fill="none" stroke="#111" stroke-width="1.1" stroke-linejoin="round"/><path d="M25 33.6A8.2 2.6 0 0 1 41.4 33.6V61.6A8.2 2.6 0 0 1 25 61.6Z" fill="#808080"/><path d="M25.2 33.9A8 2.4 0 0 0 41.2 33.9" stroke="#e8e8e8" stroke-width=".9" fill="none"/><path d="M27.5 30.5Q30 27.8 34 27.2Q38.5 27 40.8 29.6" fill="none" stroke="#ddd" stroke-width=".8"/></g><rect x="692" y="265.8" width="31" height="62.2" fill="#bbb"/><g transform="translate(686,262)"><path d="M10.9 65.9L11.5 51L14 48.5L12.5 40L12.2 33.5L14 28.5L18.5 24.5L22 23L25.5 23L26.5 25.5L26.8 29L29.5 28.2L31.5 31.5L31 37L29 41.5L24 47L23.5 48L25 52L26.5 60L27 65.9" fill="#fff" stroke="#111" stroke-width="1.2" stroke-linejoin="round"/><path d="M26.8 29L27 37M21 48.6L24 47M19 24.6L19.6 27M22.4 23.2L22.8 26" fill="none" stroke="#111" stroke-width="0.96"/></g><g transform="translate(759.9,262) scale(-1,1)"><path d="M10.9 65.9L11.5 51L14 48.5L12.5 40L12.2 33.5L14 28.5L18.5 24.5L22 23L25.5 23L26.5 25.5L26.8 29L29.5 28.2L31.5 31.5L31 37L29 41.5L24 47L23.5 48L25 52L26.5 60L27 65.9" fill="#fff" stroke="#cfc9cf" stroke-width="1" stroke-linejoin="round"/><path d="M26.8 29L27 37M21 48.6L24 47M19 24.6L19.6 27M22.4 23.2L22.8 26" fill="none" stroke="#cfc9cf" stroke-width="0.8"/></g><g transform="translate(762,262)"><path d="M16 40.5Q30 48 45 40.5" fill="none" stroke="#111" stroke-width="1.6"/><path d="M12.5 38L20 38.5L16 44.5Z M49.5 38L42 38.5L45.5 44.5Z" fill="#111"/><path d="M33 4.5L29 8L27.5 15L26 24L24.5 30L25.5 40L26.5 48L27 52.5L26.8 55L31 58.5L35 59L37 56L35 50L34.5 45L33 36L32 29.5L35 22L38.5 16L40 10L39 5L36 4Z" fill="#fff"/><path d="M30.6 6.4L29 8L27.5 15L26 24L24.5 30L25.5 40L26.5 48L27 52.5L26.8 55L31 58.5L35 59L37 56L35 50L34.5 45L33 36L32 29.5L35 22L38.5 16L39.4 12.6" fill="none" stroke="#555" stroke-width=".8" stroke-linejoin="round"/><path d="M25.4 52.8L28.4 52L29.4 55.8L26.4 56.8Z M36.4 54.4L40.6 55L40 59.2L36 58.6Z" fill="#111"/></g><g transform="translate(976,262)"><path d="M6 5.2H13.5L17.5 19.5L18.5 35L20.5 43L30 41L30.5 43L20 47.5L16.5 46L14 40L10.5 25L6 15Z" fill="#b4b4b4"/><path d="M28.5 5.2H43L46 14L48.5 21L49 28L49.5 37V48.5L47 48L45 44L44.5 43.5L43 39L40.5 30L39 23L37 19L35.5 22L31 28L28 36L26 42L26.5 43.5L30 45L32 46.5L31 48.5H25L20 46L17.5 44L18 41.5L21 33L24 26L28.5 20.5L27.3 19L28 13Z" fill="#fff"/><path d="M28.5 5.2L28 13L27.3 19L28.5 20.5L24 26L21 33L18 41.5L17.5 44L20 46L25 48.5H31L32 46.5L30 45L26.5 43.5L26 42L28 36L31 28L35.5 22L37 19L38.5 11.5" fill="none" stroke="#111" stroke-width="1.1" stroke-linejoin="round"/><path d="M43 5.2L46 14L48.5 21L49 28L49.5 37" fill="none" stroke="#111" stroke-width="1.1"/><path d="M37 19L39 23L40.5 30L43 39L44.5 43.5L46 44.2M45 44L47 48L49.5 48.5" fill="none" stroke="#111" stroke-width="1.1"/></g><path d="M1082 292.7L1101 279.3L1125.8 283.2V295.3L1114.1 310.8H1100.2L1082 306.1Z" fill="#fff"/><path d="M1089.5 289.4L1123.6 296.4M1116.3 282.1L1090.1 306.7" stroke="#999" stroke-width=".7" fill="none"/><path d="M1082 292.7L1101 279.3L1125.8 283.2M1125.8 295.3L1114.1 310.8M1082 306.1L1100.2 310.8" stroke="#111" stroke-width="1.1" fill="none"/><path d="M981.5 314.5V322.5H1018.2M1039.6 322.5H1076.5V314.5" fill="none" stroke="#b8b0b8" stroke-width="1"/><path d="M1081.5 314.5V322.5H1092.9M1114.7 322.5H1126.5V314.5" fill="none" stroke="#b8b0b8" stroke-width="1"/><path d="M1131.5 314.5V322.5H1143.1M1164.9 322.5H1176.5V314.5" fill="none" stroke="#b8b0b8" stroke-width="1"/><path d="M1148.2 266.7L1148.5 275L1149.3 278.8L1145.9 288.8L1144.8 301.6L1144.6 306.7L1146.5 310.2H1163.8L1164.9 308.3L1153.8 303.3L1155.1 295.5L1158.2 282.1L1161.8 266.7Z" fill="#fff"/><path d="M1148.2 266.7L1148.5 275L1149.3 278.8L1145.9 288.8L1144.8 301.6L1144.6 306.7L1146.5 310.2H1163.8L1164.9 308.3L1153.8 303.3L1155.1 295.5L1158.2 282.1L1161.8 266.7" fill="none" stroke="#111" stroke-width="1.1" stroke-linejoin="round"/><path d="M1145 303L1153.8 303.3" stroke="#111" stroke-width=".9"/><g transform="translate(0,0)"><circle cx="1203.7" cy="288.8" r="18.6" fill="none" stroke="#777" stroke-width=".9"/><path d="M1203.7 270.2A18.6 18.6 0 0 0 1198 306.5L1203.7 300Z" fill="#808080"/><path d="M1205 288.8H1222" stroke="#c4bcc4" stroke-width="1"/><path d="M1202.8 268.5Q1199.4 269 1198.3 272L1199.7 284.3L1198.9 291L1197.4 298.9V306.7L1197.8 310.2H1210.8V308.7L1203.4 305.6L1203.1 300L1205.6 292.2L1208.4 284.3V273.2Q1207.8 270 1206.2 269.3Q1204.6 268.3 1202.8 268.5Z" fill="#fff" stroke="#111" stroke-width="1.1" stroke-linejoin="round"/><rect x="1202.9" y="287.8" width="2" height="2" fill="#111"/></g><g transform="translate(50.1,0)"><circle cx="1203.7" cy="288.8" r="18.6" fill="none" stroke="#777" stroke-width=".9"/><path d="M1203.7 270.2A18.6 18.6 0 0 0 1198 306.5L1203.7 300Z" fill="#808080"/><path d="M1205 288.8H1222" stroke="#c4bcc4" stroke-width="1"/><path d="M1202.8 268.5Q1199.4 269 1198.3 272L1199.7 284.3L1198.9 291L1197.4 298.9V306.7L1197.8 310.2H1210.8V308.7L1203.4 305.6L1203.1 300L1205.6 292.2L1208.4 284.3V273.2Q1207.8 270 1206.2 269.3Q1204.6 268.3 1202.8 268.5Z" fill="#fff" stroke="#111" stroke-width="1.1" stroke-linejoin="round"/><rect x="1202.9" y="287.8" width="2" height="2" fill="#111"/></g><path d="M1332.1 310.9L1336.8 293.8Q1338 291.6 1342 290.6L1348 289Q1350.8 288.2 1350.4 286.6L1347.6 279Q1346 273 1347.4 270.6Q1349.6 267 1353.9 267Q1358.2 267 1360.4 270.6Q1361.8 273 1360.2 279L1357.4 286.6Q1357 288.2 1359.8 289L1365.8 290.6Q1369.6 291.6 1370.8 293.8L1375.9 310.9Z" fill="#fff"/><path d="M1332.1 310.9L1336.8 293.8Q1338 291.6 1342 290.6L1348 289Q1350.8 288.2 1350.4 286.6L1347.6 279Q1346 273 1347.4 270.6Q1349.6 267 1353.9 267Q1358.2 267 1360.4 270.6Q1361.8 273 1360.2 279L1357.4 286.6Q1357 288.2 1359.8 289L1365.8 290.6Q1369.6 291.6 1370.8 293.8L1375.9 310.9" fill="none" stroke="#8c8c8c" stroke-width="1"/><path d="M1339.6 310.9L1341.6 301.1L1343.5 310.9M1364.4 310.9L1366.4 301.1L1368.6 310.9" fill="none" stroke="#8c8c8c" stroke-width="1"/><path d="M1353.9 272V311.1" stroke="#808080" stroke-width="2"/><path d="M1353.9 293.8L1346 306.7H1361.9Z" fill="#808080"/><path d="M1396 276.4Q1398.4 274.6 1403 274V310.8H1396.4L1397.3 304L1395.4 297.8V291.5L1397.9 287.2L1396.4 280.4Z" fill="#fff"/><path d="M1401.6 266V274M1391 277.3L1396 276.4Q1398.4 274.6 1403 274M1396 276.4L1396.4 280.4L1397.9 287.2L1395.4 291.5V297.8L1397.3 304L1396.4 310.8M1397.9 287.2Q1399.8 289 1403 289" fill="none" stroke="#111" stroke-width="1.1" stroke-linejoin="round"/><rect x="1401.4" y="286.6" width="1.6" height="2.2" fill="#111"/><path d="M1390.5 314.5V322.5H1403" fill="none" stroke="#b8b0b8" stroke-width="1"/></g><g transform="translate(0,73)"><path d="M569 281.4A14 5 0 0 1 597 281.4V318.6A14 5 0 0 1 569 318.6Z" fill="#646464" stroke="#fff" stroke-opacity=".7" stroke-width=".8"/><path d="M569.3 281.9A13.8 4.6 0 0 0 596.7 281.9" stroke="#fbfbfb" stroke-width="1.3" fill="none"/><g transform="translate(0,-73)"><g transform="translate(620,335)"><path d="M2 47.8H53.3L63.5 65.5H2Z" fill="#fff"/><path d="M27 4H54L46 11.5L38 16L33 23L30 28.5L14.5 29L19 17L22.5 8Z" fill="#fff"/><path d="M2 47.8H53.3L63.5 65.5" fill="none" stroke="#808080" stroke-width="1"/><path d="M22.6 32A8.5 3.2 0 0 1 39.6 32V60A8.5 3.2 0 0 1 22.6 60Z" fill="#808080"/><path d="M22.8 32.4A8.3 2.9 0 0 0 39.4 32.4" stroke="#eee" stroke-width=".9" fill="none"/><path d="M39.6 36.8Q42.8 37.6 42.6 40.6Q42.4 43.4 39.6 43.6" fill="#fff" stroke="#111" stroke-width="1"/><path d="M27 4L22.5 8L19 17L14.5 29" fill="none" stroke="#111" stroke-width="1.1"/><path d="M54 4L46 11.5L38 16L33 23L30 28" fill="none" stroke="#111" stroke-width="1.1"/><path d="M14.5 29L11 31.5L9 37L8.7 43L10 48L13 51.5L17 54.5L20.5 56.5L23.5 55L25.5 52L26.5 50.5L28.5 47L27.5 45.5L29.5 42.5L28.5 40.5L26 37L23 33.5L22.5 31.5L24.5 29L23 27.5L19.5 26.3L16.5 27Z" fill="#fff" stroke="#111" stroke-width="1.1" stroke-linejoin="round"/><path d="M16.5 31.5Q20.5 37.4 27 42.5M14.5 36Q19.5 42.4 26.5 47M12.5 42Q17.5 48.4 25 52" fill="none" stroke="#111" stroke-width=".9"/></g></g><rect x="692" y="265.8" width="31" height="62.2" fill="#bbb"/><g transform="translate(686,262)"><path d="M10.9 65.9L11.5 51L14 48.5L12.5 40L12.2 33.5L14 28.5L18.5 24.5L22 23L25.5 23L26.5 25.5L26.8 29L29.5 28.2L31.5 31.5L31 37L29 41.5L24 47L23.5 48L25 52L26.5 60L27 65.9" fill="#fff" stroke="#111" stroke-width="1.2" stroke-linejoin="round"/><path d="M26.8 29L27 37M21 48.6L24 47M19 24.6L19.6 27M22.4 23.2L22.8 26" fill="none" stroke="#111" stroke-width="0.96"/></g><g transform="translate(759.9,262) scale(-1,1)"><path d="M10.9 65.9L11.5 51L14 48.5L12.5 40L12.2 33.5L14 28.5L18.5 24.5L22 23L25.5 23L26.5 25.5L26.8 29L29.5 28.2L31.5 31.5L31 37L29 41.5L24 47L23.5 48L25 52L26.5 60L27 65.9" fill="#fff" stroke="#cfc9cf" stroke-width="1" stroke-linejoin="round"/><path d="M26.8 29L27 37M21 48.6L24 47M19 24.6L19.6 27M22.4 23.2L22.8 26" fill="none" stroke="#cfc9cf" stroke-width="0.8"/></g><g transform="translate(762,262)"><path d="M16 40.5Q30 48 45 40.5" fill="none" stroke="#111" stroke-width="1.6"/><path d="M12.5 38L20 38.5L16 44.5Z M49.5 38L42 38.5L45.5 44.5Z" fill="#111"/><path d="M33 4.5L29 8L27.5 15L26 24L24.5 30L25.5 40L26.5 48L27 52.5L26.8 55L31 58.5L35 59L37 56L35 50L34.5 45L33 36L32 29.5L35 22L38.5 16L40 10L39 5L36 4Z" fill="#fff"/><path d="M30.6 6.4L29 8L27.5 15L26 24L24.5 30L25.5 40L26.5 48L27 52.5L26.8 55L31 58.5L35 59L37 56L35 50L34.5 45L33 36L32 29.5L35 22L38.5 16L39.4 12.6" fill="none" stroke="#555" stroke-width=".8" stroke-linejoin="round"/><path d="M25.4 52.8L28.4 52L29.4 55.8L26.4 56.8Z M36.4 54.4L40.6 55L40 59.2L36 58.6Z" fill="#111"/></g><g transform="translate(976,262)"><path d="M6 5.2H13.5L17.5 19.5L18.5 35L20.5 43L30 41L30.5 43L20 47.5L16.5 46L14 40L10.5 25L6 15Z" fill="#b4b4b4"/><path d="M28.5 5.2H43L46 14L48.5 21L49 28L49.5 37V48.5L47 48L45 44L44.5 43.5L43 39L40.5 30L39 23L37 19L35.5 22L31 28L28 36L26 42L26.5 43.5L30 45L32 46.5L31 48.5H25L20 46L17.5 44L18 41.5L21 33L24 26L28.5 20.5L27.3 19L28 13Z" fill="#fff"/><path d="M28.5 5.2L28 13L27.3 19L28.5 20.5L24 26L21 33L18 41.5L17.5 44L20 46L25 48.5H31L32 46.5L30 45L26.5 43.5L26 42L28 36L31 28L35.5 22L37 19L38.5 11.5" fill="none" stroke="#111" stroke-width="1.1" stroke-linejoin="round"/><path d="M43 5.2L46 14L48.5 21L49 28L49.5 37" fill="none" stroke="#111" stroke-width="1.1"/><path d="M37 19L39 23L40.5 30L43 39L44.5 43.5L46 44.2M45 44L47 48L49.5 48.5" fill="none" stroke="#111" stroke-width="1.1"/></g><path d="M1082 292.7L1101 279.3L1125.8 283.2V295.3L1114.1 310.8H1100.2L1082 306.1Z" fill="#fff"/><path d="M1089.5 289.4L1123.6 296.4M1116.3 282.1L1090.1 306.7" stroke="#999" stroke-width=".7" fill="none"/><path d="M1082 292.7L1101 279.3L1125.8 283.2M1125.8 295.3L1114.1 310.8M1082 306.1L1100.2 310.8" stroke="#111" stroke-width="1.1" fill="none"/><path d="M981.5 314.5V322.5H1018.2M1039.6 322.5H1076.5V314.5" fill="none" stroke="#b8b0b8" stroke-width="1"/><path d="M1081.5 314.5V322.5H1092.9M1114.7 322.5H1126.5V314.5" fill="none" stroke="#b8b0b8" stroke-width="1"/><path d="M1131.5 314.5V322.5H1143.1M1164.9 322.5H1176.5V314.5" fill="none" stroke="#b8b0b8" stroke-width="1"/><path d="M1148.2 266.7L1148.5 275L1149.3 278.8L1145.9 288.8L1144.8 301.6L1144.6 306.7L1146.5 310.2H1163.8L1164.9 308.3L1153.8 303.3L1155.1 295.5L1158.2 282.1L1161.8 266.7Z" fill="#fff"/><path d="M1148.2 266.7L1148.5 275L1149.3 278.8L1145.9 288.8L1144.8 301.6L1144.6 306.7L1146.5 310.2H1163.8L1164.9 308.3L1153.8 303.3L1155.1 295.5L1158.2 282.1L1161.8 266.7" fill="none" stroke="#111" stroke-width="1.1" stroke-linejoin="round"/><path d="M1145 303L1153.8 303.3" stroke="#111" stroke-width=".9"/><g transform="translate(0,0)"><circle cx="1203.7" cy="288.8" r="18.6" fill="none" stroke="#777" stroke-width=".9"/><path d="M1203.7 270.2A18.6 18.6 0 0 0 1198 306.5L1203.7 300Z" fill="#808080"/><path d="M1205 288.8H1222" stroke="#c4bcc4" stroke-width="1"/><path d="M1202.8 268.5Q1199.4 269 1198.3 272L1199.7 284.3L1198.9 291L1197.4 298.9V306.7L1197.8 310.2H1210.8V308.7L1203.4 305.6L1203.1 300L1205.6 292.2L1208.4 284.3V273.2Q1207.8 270 1206.2 269.3Q1204.6 268.3 1202.8 268.5Z" fill="#fff" stroke="#111" stroke-width="1.1" stroke-linejoin="round"/><rect x="1202.9" y="287.8" width="2" height="2" fill="#111"/></g><g transform="translate(50.1,0)"><circle cx="1203.7" cy="288.8" r="18.6" fill="none" stroke="#777" stroke-width=".9"/><path d="M1203.7 270.2A18.6 18.6 0 0 0 1198 306.5L1203.7 300Z" fill="#808080"/><path d="M1205 288.8H1222" stroke="#c4bcc4" stroke-width="1"/><path d="M1202.8 268.5Q1199.4 269 1198.3 272L1199.7 284.3L1198.9 291L1197.4 298.9V306.7L1197.8 310.2H1210.8V308.7L1203.4 305.6L1203.1 300L1205.6 292.2L1208.4 284.3V273.2Q1207.8 270 1206.2 269.3Q1204.6 268.3 1202.8 268.5Z" fill="#fff" stroke="#111" stroke-width="1.1" stroke-linejoin="round"/><rect x="1202.9" y="287.8" width="2" height="2" fill="#111"/></g><path d="M1332.1 310.9L1336.8 293.8Q1338 291.6 1342 290.6L1348 289Q1350.8 288.2 1350.4 286.6L1347.6 279Q1346 273 1347.4 270.6Q1349.6 267 1353.9 267Q1358.2 267 1360.4 270.6Q1361.8 273 1360.2 279L1357.4 286.6Q1357 288.2 1359.8 289L1365.8 290.6Q1369.6 291.6 1370.8 293.8L1375.9 310.9Z" fill="#fff"/><path d="M1332.1 310.9L1336.8 293.8Q1338 291.6 1342 290.6L1348 289Q1350.8 288.2 1350.4 286.6L1347.6 279Q1346 273 1347.4 270.6Q1349.6 267 1353.9 267Q1358.2 267 1360.4 270.6Q1361.8 273 1360.2 279L1357.4 286.6Q1357 288.2 1359.8 289L1365.8 290.6Q1369.6 291.6 1370.8 293.8L1375.9 310.9" fill="none" stroke="#8c8c8c" stroke-width="1"/><path d="M1339.6 310.9L1341.6 301.1L1343.5 310.9M1364.4 310.9L1366.4 301.1L1368.6 310.9" fill="none" stroke="#8c8c8c" stroke-width="1"/><path d="M1353.9 272V311.1" stroke="#808080" stroke-width="2"/><path d="M1353.9 293.8L1346 306.7H1361.9Z" fill="#808080"/><path d="M1396 276.4Q1398.4 274.6 1403 274V310.8H1396.4L1397.3 304L1395.4 297.8V291.5L1397.9 287.2L1396.4 280.4Z" fill="#fff"/><path d="M1401.6 266V274M1391 277.3L1396 276.4Q1398.4 274.6 1403 274M1396 276.4L1396.4 280.4L1397.9 287.2L1395.4 291.5V297.8L1397.3 304L1396.4 310.8M1397.9 287.2Q1399.8 289 1403 289" fill="none" stroke="#111" stroke-width="1.1" stroke-linejoin="round"/><rect x="1401.4" y="286.6" width="1.6" height="2.2" fill="#111"/><path d="M1390.5 314.5V322.5H1403" fill="none" stroke="#b8b0b8" stroke-width="1"/></g><g transform="translate(0,146)"><path d="M569 281.4A14 5 0 0 1 597 281.4V318.6A14 5 0 0 1 569 318.6Z" fill="#646464" stroke="#fff" stroke-opacity=".7" stroke-width=".8"/><path d="M569.3 281.9A13.8 4.6 0 0 0 596.7 281.9" stroke="#fbfbfb" stroke-width="1.3" fill="none"/><g transform="translate(0,-73)"><g transform="translate(620,335)"><path d="M2 47.8H53.3L63.5 65.5H2Z" fill="#fff"/><path d="M27 4H54L46 11.5L38 16L33 23L30 28.5L14.5 29L19 17L22.5 8Z" fill="#fff"/><path d="M2 47.8H53.3L63.5 65.5" fill="none" stroke="#808080" stroke-width="1"/><path d="M22.6 32A8.5 3.2 0 0 1 39.6 32V60A8.5 3.2 0 0 1 22.6 60Z" fill="#808080"/><path d="M22.8 32.4A8.3 2.9 0 0 0 39.4 32.4" stroke="#eee" stroke-width=".9" fill="none"/><path d="M39.6 36.8Q42.8 37.6 42.6 40.6Q42.4 43.4 39.6 43.6" fill="#fff" stroke="#111" stroke-width="1"/><path d="M27 4L22.5 8L19 17L14.5 29" fill="none" stroke="#111" stroke-width="1.1"/><path d="M54 4L46 11.5L38 16L33 23L30 28" fill="none" stroke="#111" stroke-width="1.1"/><path d="M14.5 29L11 31.5L9 37L8.7 43L10 48L13 51.5L17 54.5L20.5 56.5L23.5 55L25.5 52L26.5 50.5L28.5 47L27.5 45.5L29.5 42.5L28.5 40.5L26 37L23 33.5L22.5 31.5L24.5 29L23 27.5L19.5 26.3L16.5 27Z" fill="#fff" stroke="#111" stroke-width="1.1" stroke-linejoin="round"/><path d="M16.5 31.5Q20.5 37.4 27 42.5M14.5 36Q19.5 42.4 26.5 47M12.5 42Q17.5 48.4 25 52" fill="none" stroke="#111" stroke-width=".9"/></g></g><rect x="692" y="265.8" width="31" height="62.2" fill="#bbb"/><g transform="translate(686,262)"><path d="M10.9 65.9L11.5 51L14 48.5L12.5 40L12.2 33.5L14 28.5L18.5 24.5L22 23L25.5 23L26.5 25.5L26.8 29L29.5 28.2L31.5 31.5L31 37L29 41.5L24 47L23.5 48L25 52L26.5 60L27 65.9" fill="#fff" stroke="#111" stroke-width="1.2" stroke-linejoin="round"/><path d="M26.8 29L27 37M21 48.6L24 47M19 24.6L19.6 27M22.4 23.2L22.8 26" fill="none" stroke="#111" stroke-width="0.96"/></g><g transform="translate(759.9,262) scale(-1,1)"><path d="M10.9 65.9L11.5 51L14 48.5L12.5 40L12.2 33.5L14 28.5L18.5 24.5L22 23L25.5 23L26.5 25.5L26.8 29L29.5 28.2L31.5 31.5L31 37L29 41.5L24 47L23.5 48L25 52L26.5 60L27 65.9" fill="#fff" stroke="#cfc9cf" stroke-width="1" stroke-linejoin="round"/><path d="M26.8 29L27 37M21 48.6L24 47M19 24.6L19.6 27M22.4 23.2L22.8 26" fill="none" stroke="#cfc9cf" stroke-width="0.8"/></g><g transform="translate(762,262)"><path d="M16 40.5Q30 48 45 40.5" fill="none" stroke="#111" stroke-width="1.6"/><path d="M12.5 38L20 38.5L16 44.5Z M49.5 38L42 38.5L45.5 44.5Z" fill="#111"/><path d="M33 4.5L29 8L27.5 15L26 24L24.5 30L25.5 40L26.5 48L27 52.5L26.8 55L31 58.5L35 59L37 56L35 50L34.5 45L33 36L32 29.5L35 22L38.5 16L40 10L39 5L36 4Z" fill="#fff"/><path d="M30.6 6.4L29 8L27.5 15L26 24L24.5 30L25.5 40L26.5 48L27 52.5L26.8 55L31 58.5L35 59L37 56L35 50L34.5 45L33 36L32 29.5L35 22L38.5 16L39.4 12.6" fill="none" stroke="#555" stroke-width=".8" stroke-linejoin="round"/><path d="M25.4 52.8L28.4 52L29.4 55.8L26.4 56.8Z M36.4 54.4L40.6 55L40 59.2L36 58.6Z" fill="#111"/></g><g transform="translate(976,262)"><path d="M6 5.2H13.5L17.5 19.5L18.5 35L20.5 43L30 41L30.5 43L20 47.5L16.5 46L14 40L10.5 25L6 15Z" fill="#b4b4b4"/><path d="M28.5 5.2H43L46 14L48.5 21L49 28L49.5 37V48.5L47 48L45 44L44.5 43.5L43 39L40.5 30L39 23L37 19L35.5 22L31 28L28 36L26 42L26.5 43.5L30 45L32 46.5L31 48.5H25L20 46L17.5 44L18 41.5L21 33L24 26L28.5 20.5L27.3 19L28 13Z" fill="#fff"/><path d="M28.5 5.2L28 13L27.3 19L28.5 20.5L24 26L21 33L18 41.5L17.5 44L20 46L25 48.5H31L32 46.5L30 45L26.5 43.5L26 42L28 36L31 28L35.5 22L37 19L38.5 11.5" fill="none" stroke="#111" stroke-width="1.1" stroke-linejoin="round"/><path d="M43 5.2L46 14L48.5 21L49 28L49.5 37" fill="none" stroke="#111" stroke-width="1.1"/><path d="M37 19L39 23L40.5 30L43 39L44.5 43.5L46 44.2M45 44L47 48L49.5 48.5" fill="none" stroke="#111" stroke-width="1.1"/></g><path d="M1082 292.7L1101 279.3L1125.8 283.2V295.3L1114.1 310.8H1100.2L1082 306.1Z" fill="#fff"/><path d="M1089.5 289.4L1123.6 296.4M1116.3 282.1L1090.1 306.7" stroke="#999" stroke-width=".7" fill="none"/><path d="M1082 292.7L1101 279.3L1125.8 283.2M1125.8 295.3L1114.1 310.8M1082 306.1L1100.2 310.8" stroke="#111" stroke-width="1.1" fill="none"/><path d="M981.5 314.5V322.5H1018.2M1039.6 322.5H1076.5V314.5" fill="none" stroke="#b8b0b8" stroke-width="1"/><path d="M1081.5 314.5V322.5H1092.9M1114.7 322.5H1126.5V314.5" fill="none" stroke="#b8b0b8" stroke-width="1"/><path d="M1131.5 314.5V322.5H1143.1M1164.9 322.5H1176.5V314.5" fill="none" stroke="#b8b0b8" stroke-width="1"/><path d="M1148.2 266.7L1148.5 275L1149.3 278.8L1145.9 288.8L1144.8 301.6L1144.6 306.7L1146.5 310.2H1163.8L1164.9 308.3L1153.8 303.3L1155.1 295.5L1158.2 282.1L1161.8 266.7Z" fill="#fff"/><path d="M1148.2 266.7L1148.5 275L1149.3 278.8L1145.9 288.8L1144.8 301.6L1144.6 306.7L1146.5 310.2H1163.8L1164.9 308.3L1153.8 303.3L1155.1 295.5L1158.2 282.1L1161.8 266.7" fill="none" stroke="#111" stroke-width="1.1" stroke-linejoin="round"/><path d="M1145 303L1153.8 303.3" stroke="#111" stroke-width=".9"/><g transform="translate(0,0)"><circle cx="1203.7" cy="288.8" r="18.6" fill="none" stroke="#777" stroke-width=".9"/><path d="M1203.7 270.2A18.6 18.6 0 0 0 1198 306.5L1203.7 300Z" fill="#808080"/><path d="M1205 288.8H1222" stroke="#c4bcc4" stroke-width="1"/><path d="M1202.8 268.5Q1199.4 269 1198.3 272L1199.7 284.3L1198.9 291L1197.4 298.9V306.7L1197.8 310.2H1210.8V308.7L1203.4 305.6L1203.1 300L1205.6 292.2L1208.4 284.3V273.2Q1207.8 270 1206.2 269.3Q1204.6 268.3 1202.8 268.5Z" fill="#fff" stroke="#111" stroke-width="1.1" stroke-linejoin="round"/><rect x="1202.9" y="287.8" width="2" height="2" fill="#111"/></g><g transform="translate(50.1,0)"><circle cx="1203.7" cy="288.8" r="18.6" fill="none" stroke="#777" stroke-width=".9"/><path d="M1203.7 270.2A18.6 18.6 0 0 0 1198 306.5L1203.7 300Z" fill="#808080"/><path d="M1205 288.8H1222" stroke="#c4bcc4" stroke-width="1"/><path d="M1202.8 268.5Q1199.4 269 1198.3 272L1199.7 284.3L1198.9 291L1197.4 298.9V306.7L1197.8 310.2H1210.8V308.7L1203.4 305.6L1203.1 300L1205.6 292.2L1208.4 284.3V273.2Q1207.8 270 1206.2 269.3Q1204.6 268.3 1202.8 268.5Z" fill="#fff" stroke="#111" stroke-width="1.1" stroke-linejoin="round"/><rect x="1202.9" y="287.8" width="2" height="2" fill="#111"/></g><path d="M1332.1 310.9L1336.8 293.8Q1338 291.6 1342 290.6L1348 289Q1350.8 288.2 1350.4 286.6L1347.6 279Q1346 273 1347.4 270.6Q1349.6 267 1353.9 267Q1358.2 267 1360.4 270.6Q1361.8 273 1360.2 279L1357.4 286.6Q1357 288.2 1359.8 289L1365.8 290.6Q1369.6 291.6 1370.8 293.8L1375.9 310.9Z" fill="#fff"/><path d="M1332.1 310.9L1336.8 293.8Q1338 291.6 1342 290.6L1348 289Q1350.8 288.2 1350.4 286.6L1347.6 279Q1346 273 1347.4 270.6Q1349.6 267 1353.9 267Q1358.2 267 1360.4 270.6Q1361.8 273 1360.2 279L1357.4 286.6Q1357 288.2 1359.8 289L1365.8 290.6Q1369.6 291.6 1370.8 293.8L1375.9 310.9" fill="none" stroke="#8c8c8c" stroke-width="1"/><path d="M1339.6 310.9L1341.6 301.1L1343.5 310.9M1364.4 310.9L1366.4 301.1L1368.6 310.9" fill="none" stroke="#8c8c8c" stroke-width="1"/><path d="M1353.9 272V311.1" stroke="#808080" stroke-width="2"/><path d="M1353.9 293.8L1346 306.7H1361.9Z" fill="#808080"/><path d="M1396 276.4Q1398.4 274.6 1403 274V310.8H1396.4L1397.3 304L1395.4 297.8V291.5L1397.9 287.2L1396.4 280.4Z" fill="#fff"/><path d="M1401.6 266V274M1391 277.3L1396 276.4Q1398.4 274.6 1403 274M1396 276.4L1396.4 280.4L1397.9 287.2L1395.4 291.5V297.8L1397.3 304L1396.4 310.8M1397.9 287.2Q1399.8 289 1403 289" fill="none" stroke="#111" stroke-width="1.1" stroke-linejoin="round"/><rect x="1401.4" y="286.6" width="1.6" height="2.2" fill="#111"/><path d="M1390.5 314.5V322.5H1403" fill="none" stroke="#b8b0b8" stroke-width="1"/></g><g transform="translate(0,219)"><g transform="translate(0,-219)"><path d="M562.3 500V504.5L565.9 504.8L573.1 507.3L578.1 508.8L584.8 509.6L586.5 515.7L590.4 516.8L596 536.4Q600 538.4 604.9 537.5L609.4 534.7L606 509.6H611.6Q613.8 508.4 613.8 505.7V497.9Q613.4 494.6 610 494H578.1L573.1 495L565.9 497.9Z" fill="#b8b8b8" stroke="#2a2a2a" stroke-width="1.2" stroke-linejoin="round"/><path d="M577 494.2H610.4" stroke="#2a2a2a" stroke-width="1.9" fill="none"/><path d="M573.4 495.4L578 494.9V508.4L573.4 507Z" fill="#fff"/><path d="M585.6 510L588.8 510L590.6 516.2L587 515.2Z" fill="#fff"/><path d="M557.5 546.7V531.3Q551.9 528.6 551.9 523.4Q552.2 518.2 557.2 516.3L558.6 516.6V523.6Q561.9 526.6 565.3 523.6V516.6L566.6 516.3Q571.4 518.2 571.4 523.4Q571.2 528.6 566.4 531.3V546.7" fill="#b8b8b8" stroke="#2a2a2a" stroke-width="1.2" stroke-linejoin="round"/><path d="M576.1 546.7V524L578 518Q579.3 515.6 580.6 518L582.6 524V546.7" fill="#b8b8b8" stroke="#2a2a2a" stroke-width="1.1" stroke-linejoin="round"/><path d="M576.7 524L578.4 518.4Q579.3 516.8 580.2 518.4L582 524Z" fill="#fff"/></g><g transform="translate(0,-73)"><g transform="translate(620,335)"><path d="M2 47.8H53.3L63.5 65.5H2Z" fill="#fff"/><path d="M27 4H54L46 11.5L38 16L33 23L30 28.5L14.5 29L19 17L22.5 8Z" fill="#fff"/><path d="M2 47.8H53.3L63.5 65.5" fill="none" stroke="#808080" stroke-width="1"/><path d="M22.6 32A8.5 3.2 0 0 1 39.6 32V60A8.5 3.2 0 0 1 22.6 60Z" fill="#808080"/><path d="M22.8 32.4A8.3 2.9 0 0 0 39.4 32.4" stroke="#eee" stroke-width=".9" fill="none"/><path d="M39.6 36.8Q42.8 37.6 42.6 40.6Q42.4 43.4 39.6 43.6" fill="#fff" stroke="#111" stroke-width="1"/><path d="M27 4L22.5 8L19 17L14.5 29" fill="none" stroke="#111" stroke-width="1.1"/><path d="M54 4L46 11.5L38 16L33 23L30 28" fill="none" stroke="#111" stroke-width="1.1"/><path d="M14.5 29L11 31.5L9 37L8.7 43L10 48L13 51.5L17 54.5L20.5 56.5L23.5 55L25.5 52L26.5 50.5L28.5 47L27.5 45.5L29.5 42.5L28.5 40.5L26 37L23 33.5L22.5 31.5L24.5 29L23 27.5L19.5 26.3L16.5 27Z" fill="#fff" stroke="#111" stroke-width="1.1" stroke-linejoin="round"/><path d="M16.5 31.5Q20.5 37.4 27 42.5M14.5 36Q19.5 42.4 26.5 47M12.5 42Q17.5 48.4 25 52" fill="none" stroke="#111" stroke-width=".9"/></g></g><rect x="723.1" y="265.8" width="31" height="62.2" fill="#bbb"/><g transform="translate(686,262)"><path d="M10.9 65.9L11.5 51L14 48.5L12.5 40L12.2 33.5L14 28.5L18.5 24.5L22 23L25.5 23L26.5 25.5L26.8 29L29.5 28.2L31.5 31.5L31 37L29 41.5L24 47L23.5 48L25 52L26.5 60L27 65.9" fill="#fff" stroke="#cfc9cf" stroke-width="1" stroke-linejoin="round"/><path d="M26.8 29L27 37M21 48.6L24 47M19 24.6L19.6 27M22.4 23.2L22.8 26" fill="none" stroke="#cfc9cf" stroke-width="0.8"/></g><g transform="translate(759.9,262) scale(-1,1)"><path d="M10.9 65.9L11.5 51L14 48.5L12.5 40L12.2 33.5L14 28.5L18.5 24.5L22 23L25.5 23L26.5 25.5L26.8 29L29.5 28.2L31.5 31.5L31 37L29 41.5L24 47L23.5 48L25 52L26.5 60L27 65.9" fill="#fff" stroke="#111" stroke-width="1.2" stroke-linejoin="round"/><path d="M26.8 29L27 37M21 48.6L24 47M19 24.6L19.6 27M22.4 23.2L22.8 26" fill="none" stroke="#111" stroke-width="0.96"/></g><g transform="translate(0,-219)"><path d="M799.6 519L803.6 518.4L804.8 522.2L800.6 523Z M796 530.6L799.6 530.2L800.2 533L796.6 533.4Z" fill="#111"/><path d="M792.1 501L784.9 505.7L779.9 515.7L774.3 524.6Q774 528 776.5 529.1L784.3 530.8L794.4 530.2L798.3 531.9L802.7 528L804.4 524.1L799.9 521.9L794.9 523.5L788.8 521.9L791.6 517.9L794.4 512.9L795 504Z" fill="#fff"/><path d="M792.1 501L784.9 505.7L779.9 515.7L774.3 524.6Q774 528 776.5 529.1L784.3 530.8L794.4 530.2L798.3 531.9L802.7 528L804.4 524.1L799.9 521.9L794.9 523.5L788.8 521.9L782.6 522.4" fill="none" stroke="#666" stroke-width=".9" stroke-linejoin="round"/><path d="M794.4 512.9L791.6 517.9L788.8 521.9" fill="none" stroke="#666" stroke-width=".9"/></g><g transform="translate(976,262)"><path d="M6 5.2H13.5L17.5 19.5L18.5 35L20.5 43L30 41L30.5 43L20 47.5L16.5 46L14 40L10.5 25L6 15Z" fill="#b4b4b4"/><path d="M28.5 5.2H43L46 14L48.5 21L49 28L49.5 37V48.5L47 48L45 44L44.5 43.5L43 39L40.5 30L39 23L37 19L35.5 22L31 28L28 36L26 42L26.5 43.5L30 45L32 46.5L31 48.5H25L20 46L17.5 44L18 41.5L21 33L24 26L28.5 20.5L27.3 19L28 13Z" fill="#fff"/><path d="M28.5 5.2L28 13L27.3 19L28.5 20.5L24 26L21 33L18 41.5L17.5 44L20 46L25 48.5H31L32 46.5L30 45L26.5 43.5L26 42L28 36L31 28L35.5 22L37 19L38.5 11.5" fill="none" stroke="#111" stroke-width="1.1" stroke-linejoin="round"/><path d="M43 5.2L46 14L48.5 21L49 28L49.5 37" fill="none" stroke="#111" stroke-width="1.1"/><path d="M37 19L39 23L40.5 30L43 39L44.5 43.5L46 44.2M45 44L47 48L49.5 48.5" fill="none" stroke="#111" stroke-width="1.1"/></g><path d="M1082 292.7L1101 279.3L1125.8 283.2V295.3L1114.1 310.8H1100.2L1082 306.1Z" fill="#fff"/><path d="M1089.5 289.4L1123.6 296.4M1116.3 282.1L1090.1 306.7" stroke="#999" stroke-width=".7" fill="none"/><path d="M1082 292.7L1101 279.3L1125.8 283.2M1125.8 295.3L1114.1 310.8M1082 306.1L1100.2 310.8" stroke="#111" stroke-width="1.1" fill="none"/><path d="M981.5 314.5V322.5H1018.2M1039.6 322.5H1076.5V314.5" fill="none" stroke="#b8b0b8" stroke-width="1"/><path d="M1081.5 314.5V322.5H1092.9M1114.7 322.5H1126.5V314.5" fill="none" stroke="#b8b0b8" stroke-width="1"/><path d="M1131.5 314.5V322.5H1143.1M1164.9 322.5H1176.5V314.5" fill="none" stroke="#b8b0b8" stroke-width="1"/><path d="M1148.2 266.7L1148.5 275L1149.3 278.8L1145.9 288.8L1144.8 301.6L1144.6 306.7L1146.5 310.2H1163.8L1164.9 308.3L1153.8 303.3L1155.1 295.5L1158.2 282.1L1161.8 266.7Z" fill="#fff"/><path d="M1148.2 266.7L1148.5 275L1149.3 278.8L1145.9 288.8L1144.8 301.6L1144.6 306.7L1146.5 310.2H1163.8L1164.9 308.3L1153.8 303.3L1155.1 295.5L1158.2 282.1L1161.8 266.7" fill="none" stroke="#111" stroke-width="1.1" stroke-linejoin="round"/><path d="M1145 303L1153.8 303.3" stroke="#111" stroke-width=".9"/><g transform="translate(0,0)"><circle cx="1203.7" cy="288.8" r="18.6" fill="none" stroke="#777" stroke-width=".9"/><path d="M1203.7 270.2A18.6 18.6 0 0 0 1198 306.5L1203.7 300Z" fill="#808080"/><path d="M1205 288.8H1222" stroke="#c4bcc4" stroke-width="1"/><path d="M1202.8 268.5Q1199.4 269 1198.3 272L1199.7 284.3L1198.9 291L1197.4 298.9V306.7L1197.8 310.2H1210.8V308.7L1203.4 305.6L1203.1 300L1205.6 292.2L1208.4 284.3V273.2Q1207.8 270 1206.2 269.3Q1204.6 268.3 1202.8 268.5Z" fill="#fff" stroke="#111" stroke-width="1.1" stroke-linejoin="round"/><rect x="1202.9" y="287.8" width="2" height="2" fill="#111"/></g><g transform="translate(50.1,0)"><circle cx="1203.7" cy="288.8" r="18.6" fill="none" stroke="#777" stroke-width=".9"/><path d="M1203.7 270.2A18.6 18.6 0 0 0 1198 306.5L1203.7 300Z" fill="#808080"/><path d="M1205 288.8H1222" stroke="#c4bcc4" stroke-width="1"/><path d="M1202.8 268.5Q1199.4 269 1198.3 272L1199.7 284.3L1198.9 291L1197.4 298.9V306.7L1197.8 310.2H1210.8V308.7L1203.4 305.6L1203.1 300L1205.6 292.2L1208.4 284.3V273.2Q1207.8 270 1206.2 269.3Q1204.6 268.3 1202.8 268.5Z" fill="#fff" stroke="#111" stroke-width="1.1" stroke-linejoin="round"/><rect x="1202.9" y="287.8" width="2" height="2" fill="#111"/></g><path d="M1332.1 310.9L1336.8 293.8Q1338 291.6 1342 290.6L1348 289Q1350.8 288.2 1350.4 286.6L1347.6 279Q1346 273 1347.4 270.6Q1349.6 267 1353.9 267Q1358.2 267 1360.4 270.6Q1361.8 273 1360.2 279L1357.4 286.6Q1357 288.2 1359.8 289L1365.8 290.6Q1369.6 291.6 1370.8 293.8L1375.9 310.9Z" fill="#fff"/><path d="M1332.1 310.9L1336.8 293.8Q1338 291.6 1342 290.6L1348 289Q1350.8 288.2 1350.4 286.6L1347.6 279Q1346 273 1347.4 270.6Q1349.6 267 1353.9 267Q1358.2 267 1360.4 270.6Q1361.8 273 1360.2 279L1357.4 286.6Q1357 288.2 1359.8 289L1365.8 290.6Q1369.6 291.6 1370.8 293.8L1375.9 310.9" fill="none" stroke="#8c8c8c" stroke-width="1"/><path d="M1339.6 310.9L1341.6 301.1L1343.5 310.9M1364.4 310.9L1366.4 301.1L1368.6 310.9" fill="none" stroke="#8c8c8c" stroke-width="1"/><path d="M1353.9 272V311.1" stroke="#808080" stroke-width="2"/><path d="M1353.9 293.8L1346 306.7H1361.9Z" fill="#808080"/><path d="M1396 276.4Q1398.4 274.6 1403 274V310.8H1396.4L1397.3 304L1395.4 297.8V291.5L1397.9 287.2L1396.4 280.4Z" fill="#fff"/><path d="M1401.6 266V274M1391 277.3L1396 276.4Q1398.4 274.6 1403 274M1396 276.4L1396.4 280.4L1397.9 287.2L1395.4 291.5V297.8L1397.3 304L1396.4 310.8M1397.9 287.2Q1399.8 289 1403 289" fill="none" stroke="#111" stroke-width="1.1" stroke-linejoin="round"/><rect x="1401.4" y="286.6" width="1.6" height="2.2" fill="#111"/><path d="M1390.5 314.5V322.5H1403" fill="none" stroke="#b8b0b8" stroke-width="1"/></g><g transform="translate(0,292)"><g transform="translate(0,-292)"><path d="M592.1 586.5Q580 597 573.4 613.3" fill="none" stroke="#1a1a1a" stroke-width="5" stroke-linecap="round"/><path d="M580.2 577.8L584 576.2L589.8 589.6L586 591.4Z" fill="#fff" stroke="#1a1a1a" stroke-width="1.1"/><circle cx="579" cy="569.2" r="8" fill="#bcbcbc" stroke="#222" stroke-width="1.1"/><path d="M592.1 592L598.2 595.2M578.4 613.3L584.3 616.4" stroke="#333" stroke-width=".9"/></g><g transform="translate(0,-73)"><g transform="translate(620,335)"><path d="M2 47.8H53.3L63.5 65.5H2Z" fill="#fff"/><path d="M27 4H54L46 11.5L38 16L33 23L30 28.5L14.5 29L19 17L22.5 8Z" fill="#fff"/><path d="M2 47.8H53.3L63.5 65.5" fill="none" stroke="#808080" stroke-width="1"/><path d="M22.6 32A8.5 3.2 0 0 1 39.6 32V60A8.5 3.2 0 0 1 22.6 60Z" fill="#808080"/><path d="M22.8 32.4A8.3 2.9 0 0 0 39.4 32.4" stroke="#eee" stroke-width=".9" fill="none"/><path d="M39.6 36.8Q42.8 37.6 42.6 40.6Q42.4 43.4 39.6 43.6" fill="#fff" stroke="#111" stroke-width="1"/><path d="M27 4L22.5 8L19 17L14.5 29" fill="none" stroke="#111" stroke-width="1.1"/><path d="M54 4L46 11.5L38 16L33 23L30 28" fill="none" stroke="#111" stroke-width="1.1"/><path d="M14.5 29L11 31.5L9 37L8.7 43L10 48L13 51.5L17 54.5L20.5 56.5L23.5 55L25.5 52L26.5 50.5L28.5 47L27.5 45.5L29.5 42.5L28.5 40.5L26 37L23 33.5L22.5 31.5L24.5 29L23 27.5L19.5 26.3L16.5 27Z" fill="#fff" stroke="#111" stroke-width="1.1" stroke-linejoin="round"/><path d="M16.5 31.5Q20.5 37.4 27 42.5M14.5 36Q19.5 42.4 26.5 47M12.5 42Q17.5 48.4 25 52" fill="none" stroke="#111" stroke-width=".9"/></g></g><rect x="723.1" y="265.8" width="31" height="62.2" fill="#bbb"/><g transform="translate(686,262)"><path d="M10.9 65.9L11.5 51L14 48.5L12.5 40L12.2 33.5L14 28.5L18.5 24.5L22 23L25.5 23L26.5 25.5L26.8 29L29.5 28.2L31.5 31.5L31 37L29 41.5L24 47L23.5 48L25 52L26.5 60L27 65.9" fill="#fff" stroke="#cfc9cf" stroke-width="1" stroke-linejoin="round"/><path d="M26.8 29L27 37M21 48.6L24 47M19 24.6L19.6 27M22.4 23.2L22.8 26" fill="none" stroke="#cfc9cf" stroke-width="0.8"/></g><g transform="translate(0,-292)"><rect x="723.1" y="566.6" width="31.1" height="19" fill="#808080"/><path d="M733 620L734.6 604.3L735.2 601L729 593.2L728.5 586.5L730.7 583L732.2 584.8L733 573.6Q735.2 570 737.4 573.6L737.8 579.8L741.9 580.3L745.8 584.8L747.5 591L745.8 601L748.6 604.9L748 620" fill="#fff" stroke="#111" stroke-width="1.2" stroke-linejoin="round"/><path d="M732.2 584.8L732.4 590M735.2 601L738.4 602" fill="none" stroke="#111" stroke-width=".9"/></g><g transform="translate(0,-219)"><path d="M799.6 519L803.6 518.4L804.8 522.2L800.6 523Z M796 530.6L799.6 530.2L800.2 533L796.6 533.4Z" fill="#111"/><path d="M792.1 501L784.9 505.7L779.9 515.7L774.3 524.6Q774 528 776.5 529.1L784.3 530.8L794.4 530.2L798.3 531.9L802.7 528L804.4 524.1L799.9 521.9L794.9 523.5L788.8 521.9L791.6 517.9L794.4 512.9L795 504Z" fill="#fff"/><path d="M792.1 501L784.9 505.7L779.9 515.7L774.3 524.6Q774 528 776.5 529.1L784.3 530.8L794.4 530.2L798.3 531.9L802.7 528L804.4 524.1L799.9 521.9L794.9 523.5L788.8 521.9L782.6 522.4" fill="none" stroke="#666" stroke-width=".9" stroke-linejoin="round"/><path d="M794.4 512.9L791.6 517.9L788.8 521.9" fill="none" stroke="#666" stroke-width=".9"/></g><g transform="translate(976,262)"><path d="M6 5.2H13.5L17.5 19.5L18.5 35L20.5 43L30 41L30.5 43L20 47.5L16.5 46L14 40L10.5 25L6 15Z" fill="#b4b4b4"/><path d="M28.5 5.2H43L46 14L48.5 21L49 28L49.5 37V48.5L47 48L45 44L44.5 43.5L43 39L40.5 30L39 23L37 19L35.5 22L31 28L28 36L26 42L26.5 43.5L30 45L32 46.5L31 48.5H25L20 46L17.5 44L18 41.5L21 33L24 26L28.5 20.5L27.3 19L28 13Z" fill="#fff"/><path d="M28.5 5.2L28 13L27.3 19L28.5 20.5L24 26L21 33L18 41.5L17.5 44L20 46L25 48.5H31L32 46.5L30 45L26.5 43.5L26 42L28 36L31 28L35.5 22L37 19L38.5 11.5" fill="none" stroke="#111" stroke-width="1.1" stroke-linejoin="round"/><path d="M43 5.2L46 14L48.5 21L49 28L49.5 37" fill="none" stroke="#111" stroke-width="1.1"/><path d="M37 19L39 23L40.5 30L43 39L44.5 43.5L46 44.2M45 44L47 48L49.5 48.5" fill="none" stroke="#111" stroke-width="1.1"/></g><path d="M1082 292.7L1101 279.3L1125.8 283.2V295.3L1114.1 310.8H1100.2L1082 306.1Z" fill="#fff"/><path d="M1089.5 289.4L1123.6 296.4M1116.3 282.1L1090.1 306.7" stroke="#999" stroke-width=".7" fill="none"/><path d="M1082 292.7L1101 279.3L1125.8 283.2M1125.8 295.3L1114.1 310.8M1082 306.1L1100.2 310.8" stroke="#111" stroke-width="1.1" fill="none"/><path d="M981.5 314.5V322.5H1018.2M1039.6 322.5H1076.5V314.5" fill="none" stroke="#b8b0b8" stroke-width="1"/><path d="M1081.5 314.5V322.5H1092.9M1114.7 322.5H1126.5V314.5" fill="none" stroke="#b8b0b8" stroke-width="1"/><path d="M1131.5 314.5V322.5H1143.1M1164.9 322.5H1176.5V314.5" fill="none" stroke="#b8b0b8" stroke-width="1"/><path d="M1148.2 266.7L1148.5 275L1149.3 278.8L1145.9 288.8L1144.8 301.6L1144.6 306.7L1146.5 310.2H1163.8L1164.9 308.3L1153.8 303.3L1155.1 295.5L1158.2 282.1L1161.8 266.7Z" fill="#fff"/><path d="M1148.2 266.7L1148.5 275L1149.3 278.8L1145.9 288.8L1144.8 301.6L1144.6 306.7L1146.5 310.2H1163.8L1164.9 308.3L1153.8 303.3L1155.1 295.5L1158.2 282.1L1161.8 266.7" fill="none" stroke="#111" stroke-width="1.1" stroke-linejoin="round"/><path d="M1145 303L1153.8 303.3" stroke="#111" stroke-width=".9"/><g transform="translate(0,0)"><circle cx="1203.7" cy="288.8" r="18.6" fill="none" stroke="#777" stroke-width=".9"/><path d="M1203.7 270.2A18.6 18.6 0 0 0 1198 306.5L1203.7 300Z" fill="#808080"/><path d="M1205 288.8H1222" stroke="#c4bcc4" stroke-width="1"/><path d="M1202.8 268.5Q1199.4 269 1198.3 272L1199.7 284.3L1198.9 291L1197.4 298.9V306.7L1197.8 310.2H1210.8V308.7L1203.4 305.6L1203.1 300L1205.6 292.2L1208.4 284.3V273.2Q1207.8 270 1206.2 269.3Q1204.6 268.3 1202.8 268.5Z" fill="#fff" stroke="#111" stroke-width="1.1" stroke-linejoin="round"/><rect x="1202.9" y="287.8" width="2" height="2" fill="#111"/></g><g transform="translate(50.1,0)"><circle cx="1203.7" cy="288.8" r="18.6" fill="none" stroke="#777" stroke-width=".9"/><path d="M1203.7 270.2A18.6 18.6 0 0 0 1198 306.5L1203.7 300Z" fill="#808080"/><path d="M1205 288.8H1222" stroke="#c4bcc4" stroke-width="1"/><path d="M1202.8 268.5Q1199.4 269 1198.3 272L1199.7 284.3L1198.9 291L1197.4 298.9V306.7L1197.8 310.2H1210.8V308.7L1203.4 305.6L1203.1 300L1205.6 292.2L1208.4 284.3V273.2Q1207.8 270 1206.2 269.3Q1204.6 268.3 1202.8 268.5Z" fill="#fff" stroke="#111" stroke-width="1.1" stroke-linejoin="round"/><rect x="1202.9" y="287.8" width="2" height="2" fill="#111"/></g><path d="M1332.1 310.9L1336.8 293.8Q1338 291.6 1342 290.6L1348 289Q1350.8 288.2 1350.4 286.6L1347.6 279Q1346 273 1347.4 270.6Q1349.6 267 1353.9 267Q1358.2 267 1360.4 270.6Q1361.8 273 1360.2 279L1357.4 286.6Q1357 288.2 1359.8 289L1365.8 290.6Q1369.6 291.6 1370.8 293.8L1375.9 310.9Z" fill="#fff"/><path d="M1332.1 310.9L1336.8 293.8Q1338 291.6 1342 290.6L1348 289Q1350.8 288.2 1350.4 286.6L1347.6 279Q1346 273 1347.4 270.6Q1349.6 267 1353.9 267Q1358.2 267 1360.4 270.6Q1361.8 273 1360.2 279L1357.4 286.6Q1357 288.2 1359.8 289L1365.8 290.6Q1369.6 291.6 1370.8 293.8L1375.9 310.9" fill="none" stroke="#8c8c8c" stroke-width="1"/><path d="M1339.6 310.9L1341.6 301.1L1343.5 310.9M1364.4 310.9L1366.4 301.1L1368.6 310.9" fill="none" stroke="#8c8c8c" stroke-width="1"/><path d="M1353.9 272V311.1" stroke="#808080" stroke-width="2"/><path d="M1353.9 293.8L1346 306.7H1361.9Z" fill="#808080"/><path d="M1396 276.4Q1398.4 274.6 1403 274V310.8H1396.4L1397.3 304L1395.4 297.8V291.5L1397.9 287.2L1396.4 280.4Z" fill="#fff"/><path d="M1401.6 266V274M1391 277.3L1396 276.4Q1398.4 274.6 1403 274M1396 276.4L1396.4 280.4L1397.9 287.2L1395.4 291.5V297.8L1397.3 304L1396.4 310.8M1397.9 287.2Q1399.8 289 1403 289" fill="none" stroke="#111" stroke-width="1.1" stroke-linejoin="round"/><rect x="1401.4" y="286.6" width="1.6" height="2.2" fill="#111"/><path d="M1390.5 314.5V322.5H1403" fill="none" stroke="#b8b0b8" stroke-width="1"/></g><g transform="translate(0,365)"><g transform="translate(0,-219)"><path d="M562.3 500V504.5L565.9 504.8L573.1 507.3L578.1 508.8L584.8 509.6L586.5 515.7L590.4 516.8L596 536.4Q600 538.4 604.9 537.5L609.4 534.7L606 509.6H611.6Q613.8 508.4 613.8 505.7V497.9Q613.4 494.6 610 494H578.1L573.1 495L565.9 497.9Z" fill="#b8b8b8" stroke="#2a2a2a" stroke-width="1.2" stroke-linejoin="round"/><path d="M577 494.2H610.4" stroke="#2a2a2a" stroke-width="1.9" fill="none"/><path d="M573.4 495.4L578 494.9V508.4L573.4 507Z" fill="#fff"/><path d="M585.6 510L588.8 510L590.6 516.2L587 515.2Z" fill="#fff"/><path d="M557.5 546.7V531.3Q551.9 528.6 551.9 523.4Q552.2 518.2 557.2 516.3L558.6 516.6V523.6Q561.9 526.6 565.3 523.6V516.6L566.6 516.3Q571.4 518.2 571.4 523.4Q571.2 528.6 566.4 531.3V546.7" fill="#b8b8b8" stroke="#2a2a2a" stroke-width="1.2" stroke-linejoin="round"/><path d="M576.1 546.7V524L578 518Q579.3 515.6 580.6 518L582.6 524V546.7" fill="#b8b8b8" stroke="#2a2a2a" stroke-width="1.1" stroke-linejoin="round"/><path d="M576.7 524L578.4 518.4Q579.3 516.8 580.2 518.4L582 524Z" fill="#fff"/></g><g transform="translate(0,-365)"><rect x="671.4" y="630.4" width="5.2" height="2.6" rx=".8" fill="#111"/><rect x="673" y="632.6" width="2" height="2.4" fill="#111"/><circle cx="674" cy="645.5" r="10" fill="#fff" stroke="#111" stroke-width="1.3"/><path d="M674 645.5L677.6 638.6L679.8 640.4Z" fill="#999"/><circle cx="674" cy="645.2" r="1.3" fill="#111"/><path d="M666 637.4L667.4 636M682 637.4L680.6 636" stroke="#111" stroke-width="1.6"/></g><rect x="723.1" y="265.8" width="31" height="62.2" fill="#bbb"/><path d="M1148.2 266.7L1148.5 275L1149.3 278.8L1145.9 288.8L1144.8 301.6L1144.6 306.7L1146.5 310.2H1163.8L1164.9 308.3L1153.8 303.3L1155.1 295.5L1158.2 282.1L1161.8 266.7Z" fill="#fff"/><path d="M1148.2 266.7L1148.5 275L1149.3 278.8L1145.9 288.8L1144.8 301.6L1144.6 306.7L1146.5 310.2H1163.8L1164.9 308.3L1153.8 303.3L1155.1 295.5L1158.2 282.1L1161.8 266.7" fill="none" stroke="#111" stroke-width="1.1" stroke-linejoin="round"/><path d="M1145 303L1153.8 303.3" stroke="#111" stroke-width=".9"/><g transform="translate(0,0)"><circle cx="1203.7" cy="288.8" r="18.6" fill="none" stroke="#777" stroke-width=".9"/><path d="M1203.7 270.2A18.6 18.6 0 0 0 1198 306.5L1203.7 300Z" fill="#808080"/><path d="M1205 288.8H1222" stroke="#c4bcc4" stroke-width="1"/><path d="M1202.8 268.5Q1199.4 269 1198.3 272L1199.7 284.3L1198.9 291L1197.4 298.9V306.7L1197.8 310.2H1210.8V308.7L1203.4 305.6L1203.1 300L1205.6 292.2L1208.4 284.3V273.2Q1207.8 270 1206.2 269.3Q1204.6 268.3 1202.8 268.5Z" fill="#fff" stroke="#111" stroke-width="1.1" stroke-linejoin="round"/><rect x="1202.9" y="287.8" width="2" height="2" fill="#111"/></g><g transform="translate(50.1,0)"><circle cx="1203.7" cy="288.8" r="18.6" fill="none" stroke="#777" stroke-width=".9"/><path d="M1203.7 270.2A18.6 18.6 0 0 0 1198 306.5L1203.7 300Z" fill="#808080"/><path d="M1205 288.8H1222" stroke="#c4bcc4" stroke-width="1"/><path d="M1202.8 268.5Q1199.4 269 1198.3 272L1199.7 284.3L1198.9 291L1197.4 298.9V306.7L1197.8 310.2H1210.8V308.7L1203.4 305.6L1203.1 300L1205.6 292.2L1208.4 284.3V273.2Q1207.8 270 1206.2 269.3Q1204.6 268.3 1202.8 268.5Z" fill="#fff" stroke="#111" stroke-width="1.1" stroke-linejoin="round"/><rect x="1202.9" y="287.8" width="2" height="2" fill="#111"/></g><path d="M1332.1 310.9L1336.8 293.8Q1338 291.6 1342 290.6L1348 289Q1350.8 288.2 1350.4 286.6L1347.6 279Q1346 273 1347.4 270.6Q1349.6 267 1353.9 267Q1358.2 267 1360.4 270.6Q1361.8 273 1360.2 279L1357.4 286.6Q1357 288.2 1359.8 289L1365.8 290.6Q1369.6 291.6 1370.8 293.8L1375.9 310.9Z" fill="#fff"/><path d="M1332.1 310.9L1336.8 293.8Q1338 291.6 1342 290.6L1348 289Q1350.8 288.2 1350.4 286.6L1347.6 279Q1346 273 1347.4 270.6Q1349.6 267 1353.9 267Q1358.2 267 1360.4 270.6Q1361.8 273 1360.2 279L1357.4 286.6Q1357 288.2 1359.8 289L1365.8 290.6Q1369.6 291.6 1370.8 293.8L1375.9 310.9" fill="none" stroke="#8c8c8c" stroke-width="1"/><path d="M1339.6 310.9L1341.6 301.1L1343.5 310.9M1364.4 310.9L1366.4 301.1L1368.6 310.9" fill="none" stroke="#8c8c8c" stroke-width="1"/><path d="M1353.9 272V311.1" stroke="#808080" stroke-width="2"/><path d="M1353.9 293.8L1346 306.7H1361.9Z" fill="#808080"/><path d="M1396 276.4Q1398.4 274.6 1403 274V310.8H1396.4L1397.3 304L1395.4 297.8V291.5L1397.9 287.2L1396.4 280.4Z" fill="#fff"/><path d="M1401.6 266V274M1391 277.3L1396 276.4Q1398.4 274.6 1403 274M1396 276.4L1396.4 280.4L1397.9 287.2L1395.4 291.5V297.8L1397.3 304L1396.4 310.8M1397.9 287.2Q1399.8 289 1403 289" fill="none" stroke="#111" stroke-width="1.1" stroke-linejoin="round"/><rect x="1401.4" y="286.6" width="1.6" height="2.2" fill="#111"/><path d="M1390.5 314.5V322.5H1403" fill="none" stroke="#b8b0b8" stroke-width="1"/></g></svg>
<span class="t" style="left:1037.60px;top:276.34px;font-size:12px;line-height:12px;letter-spacing:-0.605px;color:#000;">Gehen</span>
<span class="t" style="left:1044.20px;top:291.34px;font-size:12px;line-height:12px;letter-spacing:-0.201px;color:#000;">0 m</span>
<span class="t" style="left:1022.90px;top:317.96px;font-size:9.5px;line-height:9.5px;letter-spacing:-0.502px;color:#222;">0,0</span>
<span class="t" style="left:1097.90px;top:317.96px;font-size:9.5px;line-height:9.5px;letter-spacing:-0.502px;color:#222;">0,0</span>
<span class="t" style="left:1148.00px;top:317.96px;font-size:9.5px;line-height:9.5px;letter-spacing:-0.435px;color:#222;">0,0</span>
<span class="t" style="left:1037.60px;top:349.34px;font-size:12px;line-height:12px;letter-spacing:-0.605px;color:#000;">Gehen</span>
<span class="t" style="left:1044.20px;top:364.34px;font-size:12px;line-height:12px;letter-spacing:-0.201px;color:#000;">0 m</span>
<span class="t" style="left:1022.90px;top:390.96px;font-size:9.5px;line-height:9.5px;letter-spacing:-0.502px;color:#222;">0,0</span>
<span class="t" style="left:1097.90px;top:390.96px;font-size:9.5px;line-height:9.5px;letter-spacing:-0.502px;color:#222;">0,0</span>
<span class="t" style="left:1148.00px;top:390.96px;font-size:9.5px;line-height:9.5px;letter-spacing:-0.435px;color:#222;">0,0</span>
<span class="t" style="left:1037.60px;top:422.34px;font-size:12px;line-height:12px;letter-spacing:-0.605px;color:#000;">Gehen</span>
<span class="t" style="left:1044.20px;top:437.34px;font-size:12px;line-height:12px;letter-spacing:-0.201px;color:#000;">0 m</span>
<span class="t" style="left:1022.90px;top:463.96px;font-size:9.5px;line-height:9.5px;letter-spacing:-0.502px;color:#222;">0,0</span>
<span class="t" style="left:1097.90px;top:463.96px;font-size:9.5px;line-height:9.5px;letter-spacing:-0.502px;color:#222;">0,0</span>
<span class="t" style="left:1148.00px;top:463.96px;font-size:9.5px;line-height:9.5px;letter-spacing:-0.435px;color:#222;">0,0</span>
<span class="t" style="left:1037.60px;top:495.34px;font-size:12px;line-height:12px;letter-spacing:-0.605px;color:#000;">Gehen</span>
<span class="t" style="left:1044.20px;top:510.34px;font-size:12px;line-height:12px;letter-spacing:-0.201px;color:#000;">0 m</span>
<span class="t" style="left:1022.90px;top:536.96px;font-size:9.5px;line-height:9.5px;letter-spacing:-0.502px;color:#222;">0,0</span>
<span class="t" style="left:1097.90px;top:536.96px;font-size:9.5px;line-height:9.5px;letter-spacing:-0.502px;color:#222;">0,0</span>
<span class="t" style="left:1148.00px;top:536.96px;font-size:9.5px;line-height:9.5px;letter-spacing:-0.435px;color:#222;">0,0</span>
<span class="t" style="left:1037.60px;top:568.34px;font-size:12px;line-height:12px;letter-spacing:-0.605px;color:#000;">Gehen</span>
<span class="t" style="left:1044.20px;top:583.34px;font-size:12px;line-height:12px;letter-spacing:-0.201px;color:#000;">0 m</span>
<span class="t" style="left:1022.90px;top:609.96px;font-size:9.5px;line-height:9.5px;letter-spacing:-0.502px;color:#222;">0,0</span>
<span class="t" style="left:1097.90px;top:609.96px;font-size:9.5px;line-height:9.5px;letter-spacing:-0.502px;color:#222;">0,0</span>
<span class="t" style="left:1148.00px;top:609.96px;font-size:9.5px;line-height:9.5px;letter-spacing:-0.435px;color:#222;">0,0</span>
</body></html>
